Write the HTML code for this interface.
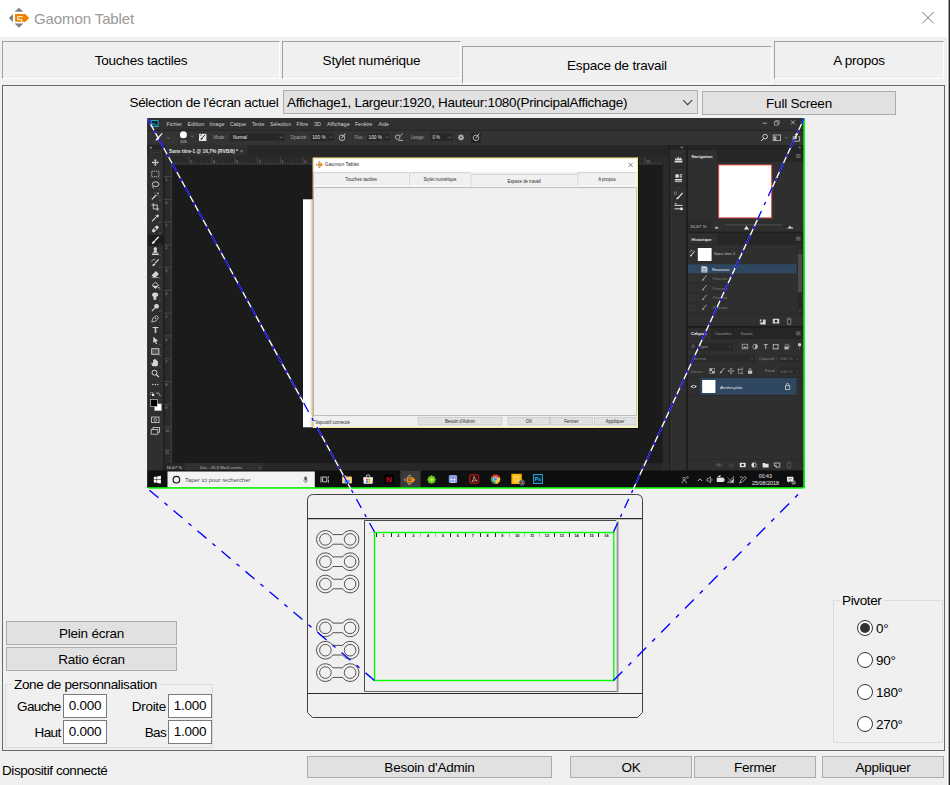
<!DOCTYPE html>
<html lang="fr">
<head>
<meta charset="utf-8">
<title>Gaomon Tablet</title>
<style>
html,body{margin:0;padding:0;}
body{width:950px;height:785px;overflow:hidden;background:#f0f0f0;font-family:"Liberation Sans", sans-serif;font-size:13.5px;letter-spacing:-0.22px;color:#000;position:relative;}
.abs{position:absolute;box-sizing:border-box;}
.titlebar{left:0;top:0;width:950px;height:37px;background:#fff;}
.title{left:34px;top:9px;font-size:15px;color:#999;white-space:nowrap;line-height:20px;letter-spacing:-0.1px;}
.tab{height:38px;border:1px solid;border-color:#a0a0a0 #fff #fff #a0a0a0;text-align:center;line-height:38px;white-space:nowrap;}
.panel{left:2px;top:85px;width:943px;height:666px;border:1px solid #696969;}
.btn{background:#e1e1e1;border:1px solid #adadad;text-align:center;white-space:nowrap;}
.lbl{white-space:nowrap;line-height:16px;margin-top:1px;letter-spacing:-0.3px;}
.nar{letter-spacing:-0.65px;}
.inp{background:#fff;border:1px solid #7a7a7a;width:44px;height:24px;text-align:center;line-height:22px;}
.grp{border:1px solid #dcdcdc;}
.grpl{background:#f0f0f0;padding:0 2px;white-space:nowrap;line-height:16px;margin-top:1px;letter-spacing:-0.36px;}
.radio{width:16px;height:16px;border:1px solid #333;border-radius:50%;background:#fff;}
.dot{width:10px;height:10px;border-radius:50%;background:#333;left:2px;top:2px;}
svg text{font-family:"Liberation Sans", sans-serif;letter-spacing:0;}
</style>
</head>
<body>
<div class="abs titlebar"></div>
<svg class="abs" style="left:0;top:0" width="60" height="37" viewBox="0 0 60 37">
<path d="M14.6,11.8 H23.4 L19,7.8 Z M14.6,23.4 H23.4 L19,27.8 Z M13,14 V22 L8.8,18 Z" fill="#808080"/>
<path d="M15,14 H25.4 L29.1,17.9 L25.4,22.1 H15 Z" fill="#f08200"/>
<path d="M22.6,16.7 H17.6 V19.4 H21.6 V21.8" fill="none" stroke="#fff" stroke-width="1"/>
<path d="M15,22 H24" stroke="#fff" stroke-width="0.6"/>
</svg>
<div class="abs title">Gaomon Tablet</div>
<svg class="abs" style="left:916px;top:6px" width="24" height="24" viewBox="0 0 24 24"><path d="M6.3,6 L17.7,17.4 M17.7,6 L6.3,17.4" stroke="#7a7a7a" stroke-width="1"/></svg>

<div class="abs tab" style="left:2px;top:41px;width:278px;">Touches tactiles</div>
<div class="abs tab" style="left:282px;top:41px;width:179px;">Stylet numérique</div>
<div class="abs tab" style="left:462px;top:46px;width:310px;">Espace de travail</div>
<div class="abs tab" style="left:774px;top:41px;width:170px;">A propos</div>

<div class="abs panel"></div>

<div class="abs lbl" style="left:100px;top:94px;width:178.5px;text-align:right;">Sélection de l'écran actuel</div>
<div class="abs" style="left:283px;top:90px;width:415px;height:24px;background:#e1e1e1;border:1px solid #adadad;"></div>
<div class="abs lbl" style="left:287px;top:94px;">Affichage1, Largeur:1920, Hauteur:1080(PrincipalAffichage)</div>
<svg class="abs" style="left:680px;top:96px" width="16" height="14" viewBox="0 0 16 14"><path d="M3.1,4.2 L7.6,8.7 L12.1,4.2" fill="none" stroke="#3c3c3c" stroke-width="1.1"/></svg>
<div class="abs btn" style="left:702px;top:91px;width:194px;height:24px;line-height:24px;">Full Screen</div>

<svg class="abs" style="left:0;top:0" width="950" height="785" viewBox="0 0 950 785">
<rect x="147.50" y="118.00" width="656.10" height="369.60" fill="#1b1b1b" />
<rect x="147.50" y="118.00" width="656.10" height="12.30" fill="#303030" />
<rect x="147.50" y="130.30" width="656.10" height="14.70" fill="#333333" />
<line x1="147.50" y1="130.30" x2="803.60" y2="130.30" stroke="#242424" stroke-width="0.6" />
<rect x="147.50" y="145.00" width="656.10" height="12.00" fill="#262626" />
<rect x="147.50" y="149.40" width="16.00" height="321.40" fill="#2f2f2f" />
<rect x="147.50" y="144.80" width="16.00" height="4.60" fill="#242424" />
<rect x="163.00" y="144.80" width="1.60" height="326.00" fill="#1f1f1f" />
<text x="149.50" y="149.00" font-size="4.5" fill="#c8c8c8" >«</text>
<path d="M151,152.4 h9" stroke="#454545" stroke-width="0.7" stroke-dasharray="0.7 0.5"/>
<rect x="164.60" y="145.00" width="83.10" height="11.60" fill="#2f2f2f" />
<text x="169.00" y="153.20" font-size="4.6" fill="#e6e6e6" textLength="69.00" lengthAdjust="spacingAndGlyphs" font-weight="bold" >Sans titre-1 @ 16,7% (RVB/8) *</text>
<text x="240.00" y="153.40" font-size="5" fill="#b0b0b0" >×</text>
<rect x="164.60" y="156.50" width="498.00" height="8.00" fill="#2a2a2a" />
<rect x="164.60" y="164.40" width="7.40" height="299.00" fill="#2a2a2a" />
<line x1="172.00" y1="164.20" x2="662.60" y2="164.20" stroke="#3a3a3a" stroke-width="0.5" />
<line x1="171.80" y1="164.40" x2="171.80" y2="463.00" stroke="#3a3a3a" stroke-width="0.5" />
<line x1="173.15" y1="163.00" x2="173.15" y2="164.40" stroke="#666666" stroke-width="0.45" />
<line x1="175.43" y1="163.00" x2="175.43" y2="164.40" stroke="#666666" stroke-width="0.45" />
<line x1="177.71" y1="162.00" x2="177.71" y2="164.40" stroke="#666666" stroke-width="0.45" />
<line x1="179.99" y1="163.00" x2="179.99" y2="164.40" stroke="#666666" stroke-width="0.45" />
<line x1="182.27" y1="163.00" x2="182.27" y2="164.40" stroke="#666666" stroke-width="0.45" />
<line x1="184.54" y1="163.00" x2="184.54" y2="164.40" stroke="#666666" stroke-width="0.45" />
<line x1="186.82" y1="163.00" x2="186.82" y2="164.40" stroke="#666666" stroke-width="0.45" />
<line x1="189.10" y1="157.00" x2="189.10" y2="164.40" stroke="#5a5a5a" stroke-width="0.6" />
<text x="190.30" y="162.60" font-size="3.8" fill="#9a9a9a" >5</text>
<line x1="191.38" y1="163.00" x2="191.38" y2="164.40" stroke="#666666" stroke-width="0.45" />
<line x1="193.66" y1="163.00" x2="193.66" y2="164.40" stroke="#666666" stroke-width="0.45" />
<line x1="195.93" y1="163.00" x2="195.93" y2="164.40" stroke="#666666" stroke-width="0.45" />
<line x1="198.21" y1="163.00" x2="198.21" y2="164.40" stroke="#666666" stroke-width="0.45" />
<line x1="200.49" y1="162.00" x2="200.49" y2="164.40" stroke="#666666" stroke-width="0.45" />
<line x1="202.77" y1="163.00" x2="202.77" y2="164.40" stroke="#666666" stroke-width="0.45" />
<line x1="205.05" y1="163.00" x2="205.05" y2="164.40" stroke="#666666" stroke-width="0.45" />
<line x1="207.32" y1="163.00" x2="207.32" y2="164.40" stroke="#666666" stroke-width="0.45" />
<line x1="209.60" y1="163.00" x2="209.60" y2="164.40" stroke="#666666" stroke-width="0.45" />
<line x1="211.88" y1="157.00" x2="211.88" y2="164.40" stroke="#5a5a5a" stroke-width="0.6" />
<text x="213.08" y="162.60" font-size="3.8" fill="#9a9a9a" >4</text>
<line x1="214.16" y1="163.00" x2="214.16" y2="164.40" stroke="#666666" stroke-width="0.45" />
<line x1="216.44" y1="163.00" x2="216.44" y2="164.40" stroke="#666666" stroke-width="0.45" />
<line x1="218.71" y1="163.00" x2="218.71" y2="164.40" stroke="#666666" stroke-width="0.45" />
<line x1="220.99" y1="163.00" x2="220.99" y2="164.40" stroke="#666666" stroke-width="0.45" />
<line x1="223.27" y1="162.00" x2="223.27" y2="164.40" stroke="#666666" stroke-width="0.45" />
<line x1="225.55" y1="163.00" x2="225.55" y2="164.40" stroke="#666666" stroke-width="0.45" />
<line x1="227.83" y1="163.00" x2="227.83" y2="164.40" stroke="#666666" stroke-width="0.45" />
<line x1="230.10" y1="163.00" x2="230.10" y2="164.40" stroke="#666666" stroke-width="0.45" />
<line x1="232.38" y1="163.00" x2="232.38" y2="164.40" stroke="#666666" stroke-width="0.45" />
<line x1="234.66" y1="157.00" x2="234.66" y2="164.40" stroke="#5a5a5a" stroke-width="0.6" />
<text x="235.86" y="162.60" font-size="3.8" fill="#9a9a9a" >3</text>
<line x1="236.94" y1="163.00" x2="236.94" y2="164.40" stroke="#666666" stroke-width="0.45" />
<line x1="239.22" y1="163.00" x2="239.22" y2="164.40" stroke="#666666" stroke-width="0.45" />
<line x1="241.49" y1="163.00" x2="241.49" y2="164.40" stroke="#666666" stroke-width="0.45" />
<line x1="243.77" y1="163.00" x2="243.77" y2="164.40" stroke="#666666" stroke-width="0.45" />
<line x1="246.05" y1="162.00" x2="246.05" y2="164.40" stroke="#666666" stroke-width="0.45" />
<line x1="248.33" y1="163.00" x2="248.33" y2="164.40" stroke="#666666" stroke-width="0.45" />
<line x1="250.61" y1="163.00" x2="250.61" y2="164.40" stroke="#666666" stroke-width="0.45" />
<line x1="252.88" y1="163.00" x2="252.88" y2="164.40" stroke="#666666" stroke-width="0.45" />
<line x1="255.16" y1="163.00" x2="255.16" y2="164.40" stroke="#666666" stroke-width="0.45" />
<line x1="257.44" y1="157.00" x2="257.44" y2="164.40" stroke="#5a5a5a" stroke-width="0.6" />
<text x="258.64" y="162.60" font-size="3.8" fill="#9a9a9a" >2</text>
<line x1="259.72" y1="163.00" x2="259.72" y2="164.40" stroke="#666666" stroke-width="0.45" />
<line x1="262.00" y1="163.00" x2="262.00" y2="164.40" stroke="#666666" stroke-width="0.45" />
<line x1="264.27" y1="163.00" x2="264.27" y2="164.40" stroke="#666666" stroke-width="0.45" />
<line x1="266.55" y1="163.00" x2="266.55" y2="164.40" stroke="#666666" stroke-width="0.45" />
<line x1="268.83" y1="162.00" x2="268.83" y2="164.40" stroke="#666666" stroke-width="0.45" />
<line x1="271.11" y1="163.00" x2="271.11" y2="164.40" stroke="#666666" stroke-width="0.45" />
<line x1="273.39" y1="163.00" x2="273.39" y2="164.40" stroke="#666666" stroke-width="0.45" />
<line x1="275.66" y1="163.00" x2="275.66" y2="164.40" stroke="#666666" stroke-width="0.45" />
<line x1="277.94" y1="163.00" x2="277.94" y2="164.40" stroke="#666666" stroke-width="0.45" />
<line x1="280.22" y1="157.00" x2="280.22" y2="164.40" stroke="#5a5a5a" stroke-width="0.6" />
<text x="281.42" y="162.60" font-size="3.8" fill="#9a9a9a" >1</text>
<line x1="282.50" y1="163.00" x2="282.50" y2="164.40" stroke="#666666" stroke-width="0.45" />
<line x1="284.78" y1="163.00" x2="284.78" y2="164.40" stroke="#666666" stroke-width="0.45" />
<line x1="287.05" y1="163.00" x2="287.05" y2="164.40" stroke="#666666" stroke-width="0.45" />
<line x1="289.33" y1="163.00" x2="289.33" y2="164.40" stroke="#666666" stroke-width="0.45" />
<line x1="291.61" y1="162.00" x2="291.61" y2="164.40" stroke="#666666" stroke-width="0.45" />
<line x1="293.89" y1="163.00" x2="293.89" y2="164.40" stroke="#666666" stroke-width="0.45" />
<line x1="296.17" y1="163.00" x2="296.17" y2="164.40" stroke="#666666" stroke-width="0.45" />
<line x1="298.44" y1="163.00" x2="298.44" y2="164.40" stroke="#666666" stroke-width="0.45" />
<line x1="300.72" y1="163.00" x2="300.72" y2="164.40" stroke="#666666" stroke-width="0.45" />
<line x1="303.00" y1="157.00" x2="303.00" y2="164.40" stroke="#5a5a5a" stroke-width="0.6" />
<text x="304.20" y="162.60" font-size="3.8" fill="#9a9a9a" >0</text>
<line x1="305.28" y1="163.00" x2="305.28" y2="164.40" stroke="#666666" stroke-width="0.45" />
<line x1="307.56" y1="163.00" x2="307.56" y2="164.40" stroke="#666666" stroke-width="0.45" />
<line x1="309.83" y1="163.00" x2="309.83" y2="164.40" stroke="#666666" stroke-width="0.45" />
<line x1="312.11" y1="163.00" x2="312.11" y2="164.40" stroke="#666666" stroke-width="0.45" />
<line x1="314.39" y1="162.00" x2="314.39" y2="164.40" stroke="#666666" stroke-width="0.45" />
<line x1="316.67" y1="163.00" x2="316.67" y2="164.40" stroke="#666666" stroke-width="0.45" />
<line x1="318.95" y1="163.00" x2="318.95" y2="164.40" stroke="#666666" stroke-width="0.45" />
<line x1="321.22" y1="163.00" x2="321.22" y2="164.40" stroke="#666666" stroke-width="0.45" />
<line x1="323.50" y1="163.00" x2="323.50" y2="164.40" stroke="#666666" stroke-width="0.45" />
<line x1="325.78" y1="157.00" x2="325.78" y2="164.40" stroke="#5a5a5a" stroke-width="0.6" />
<text x="326.98" y="162.60" font-size="3.8" fill="#9a9a9a" >1</text>
<line x1="328.06" y1="163.00" x2="328.06" y2="164.40" stroke="#666666" stroke-width="0.45" />
<line x1="330.34" y1="163.00" x2="330.34" y2="164.40" stroke="#666666" stroke-width="0.45" />
<line x1="332.61" y1="163.00" x2="332.61" y2="164.40" stroke="#666666" stroke-width="0.45" />
<line x1="334.89" y1="163.00" x2="334.89" y2="164.40" stroke="#666666" stroke-width="0.45" />
<line x1="337.17" y1="162.00" x2="337.17" y2="164.40" stroke="#666666" stroke-width="0.45" />
<line x1="339.45" y1="163.00" x2="339.45" y2="164.40" stroke="#666666" stroke-width="0.45" />
<line x1="341.73" y1="163.00" x2="341.73" y2="164.40" stroke="#666666" stroke-width="0.45" />
<line x1="344.00" y1="163.00" x2="344.00" y2="164.40" stroke="#666666" stroke-width="0.45" />
<line x1="346.28" y1="163.00" x2="346.28" y2="164.40" stroke="#666666" stroke-width="0.45" />
<line x1="348.56" y1="157.00" x2="348.56" y2="164.40" stroke="#5a5a5a" stroke-width="0.6" />
<text x="349.76" y="162.60" font-size="3.8" fill="#9a9a9a" >2</text>
<line x1="350.84" y1="163.00" x2="350.84" y2="164.40" stroke="#666666" stroke-width="0.45" />
<line x1="353.12" y1="163.00" x2="353.12" y2="164.40" stroke="#666666" stroke-width="0.45" />
<line x1="355.39" y1="163.00" x2="355.39" y2="164.40" stroke="#666666" stroke-width="0.45" />
<line x1="357.67" y1="163.00" x2="357.67" y2="164.40" stroke="#666666" stroke-width="0.45" />
<line x1="359.95" y1="162.00" x2="359.95" y2="164.40" stroke="#666666" stroke-width="0.45" />
<line x1="362.23" y1="163.00" x2="362.23" y2="164.40" stroke="#666666" stroke-width="0.45" />
<line x1="364.51" y1="163.00" x2="364.51" y2="164.40" stroke="#666666" stroke-width="0.45" />
<line x1="366.78" y1="163.00" x2="366.78" y2="164.40" stroke="#666666" stroke-width="0.45" />
<line x1="369.06" y1="163.00" x2="369.06" y2="164.40" stroke="#666666" stroke-width="0.45" />
<line x1="371.34" y1="157.00" x2="371.34" y2="164.40" stroke="#5a5a5a" stroke-width="0.6" />
<text x="372.54" y="162.60" font-size="3.8" fill="#9a9a9a" >3</text>
<line x1="373.62" y1="163.00" x2="373.62" y2="164.40" stroke="#666666" stroke-width="0.45" />
<line x1="375.90" y1="163.00" x2="375.90" y2="164.40" stroke="#666666" stroke-width="0.45" />
<line x1="378.17" y1="163.00" x2="378.17" y2="164.40" stroke="#666666" stroke-width="0.45" />
<line x1="380.45" y1="163.00" x2="380.45" y2="164.40" stroke="#666666" stroke-width="0.45" />
<line x1="382.73" y1="162.00" x2="382.73" y2="164.40" stroke="#666666" stroke-width="0.45" />
<line x1="385.01" y1="163.00" x2="385.01" y2="164.40" stroke="#666666" stroke-width="0.45" />
<line x1="387.29" y1="163.00" x2="387.29" y2="164.40" stroke="#666666" stroke-width="0.45" />
<line x1="389.56" y1="163.00" x2="389.56" y2="164.40" stroke="#666666" stroke-width="0.45" />
<line x1="391.84" y1="163.00" x2="391.84" y2="164.40" stroke="#666666" stroke-width="0.45" />
<line x1="394.12" y1="157.00" x2="394.12" y2="164.40" stroke="#5a5a5a" stroke-width="0.6" />
<text x="395.32" y="162.60" font-size="3.8" fill="#9a9a9a" >4</text>
<line x1="396.40" y1="163.00" x2="396.40" y2="164.40" stroke="#666666" stroke-width="0.45" />
<line x1="398.68" y1="163.00" x2="398.68" y2="164.40" stroke="#666666" stroke-width="0.45" />
<line x1="400.95" y1="163.00" x2="400.95" y2="164.40" stroke="#666666" stroke-width="0.45" />
<line x1="403.23" y1="163.00" x2="403.23" y2="164.40" stroke="#666666" stroke-width="0.45" />
<line x1="405.51" y1="162.00" x2="405.51" y2="164.40" stroke="#666666" stroke-width="0.45" />
<line x1="407.79" y1="163.00" x2="407.79" y2="164.40" stroke="#666666" stroke-width="0.45" />
<line x1="410.07" y1="163.00" x2="410.07" y2="164.40" stroke="#666666" stroke-width="0.45" />
<line x1="412.34" y1="163.00" x2="412.34" y2="164.40" stroke="#666666" stroke-width="0.45" />
<line x1="414.62" y1="163.00" x2="414.62" y2="164.40" stroke="#666666" stroke-width="0.45" />
<line x1="416.90" y1="157.00" x2="416.90" y2="164.40" stroke="#5a5a5a" stroke-width="0.6" />
<text x="418.10" y="162.60" font-size="3.8" fill="#9a9a9a" >5</text>
<line x1="419.18" y1="163.00" x2="419.18" y2="164.40" stroke="#666666" stroke-width="0.45" />
<line x1="421.46" y1="163.00" x2="421.46" y2="164.40" stroke="#666666" stroke-width="0.45" />
<line x1="423.73" y1="163.00" x2="423.73" y2="164.40" stroke="#666666" stroke-width="0.45" />
<line x1="426.01" y1="163.00" x2="426.01" y2="164.40" stroke="#666666" stroke-width="0.45" />
<line x1="428.29" y1="162.00" x2="428.29" y2="164.40" stroke="#666666" stroke-width="0.45" />
<line x1="430.57" y1="163.00" x2="430.57" y2="164.40" stroke="#666666" stroke-width="0.45" />
<line x1="432.85" y1="163.00" x2="432.85" y2="164.40" stroke="#666666" stroke-width="0.45" />
<line x1="435.12" y1="163.00" x2="435.12" y2="164.40" stroke="#666666" stroke-width="0.45" />
<line x1="437.40" y1="163.00" x2="437.40" y2="164.40" stroke="#666666" stroke-width="0.45" />
<line x1="439.68" y1="157.00" x2="439.68" y2="164.40" stroke="#5a5a5a" stroke-width="0.6" />
<text x="440.88" y="162.60" font-size="3.8" fill="#9a9a9a" >6</text>
<line x1="441.96" y1="163.00" x2="441.96" y2="164.40" stroke="#666666" stroke-width="0.45" />
<line x1="444.24" y1="163.00" x2="444.24" y2="164.40" stroke="#666666" stroke-width="0.45" />
<line x1="446.51" y1="163.00" x2="446.51" y2="164.40" stroke="#666666" stroke-width="0.45" />
<line x1="448.79" y1="163.00" x2="448.79" y2="164.40" stroke="#666666" stroke-width="0.45" />
<line x1="451.07" y1="162.00" x2="451.07" y2="164.40" stroke="#666666" stroke-width="0.45" />
<line x1="453.35" y1="163.00" x2="453.35" y2="164.40" stroke="#666666" stroke-width="0.45" />
<line x1="455.63" y1="163.00" x2="455.63" y2="164.40" stroke="#666666" stroke-width="0.45" />
<line x1="457.90" y1="163.00" x2="457.90" y2="164.40" stroke="#666666" stroke-width="0.45" />
<line x1="460.18" y1="163.00" x2="460.18" y2="164.40" stroke="#666666" stroke-width="0.45" />
<line x1="462.46" y1="157.00" x2="462.46" y2="164.40" stroke="#5a5a5a" stroke-width="0.6" />
<text x="463.66" y="162.60" font-size="3.8" fill="#9a9a9a" >7</text>
<line x1="464.74" y1="163.00" x2="464.74" y2="164.40" stroke="#666666" stroke-width="0.45" />
<line x1="467.02" y1="163.00" x2="467.02" y2="164.40" stroke="#666666" stroke-width="0.45" />
<line x1="469.29" y1="163.00" x2="469.29" y2="164.40" stroke="#666666" stroke-width="0.45" />
<line x1="471.57" y1="163.00" x2="471.57" y2="164.40" stroke="#666666" stroke-width="0.45" />
<line x1="473.85" y1="162.00" x2="473.85" y2="164.40" stroke="#666666" stroke-width="0.45" />
<line x1="476.13" y1="163.00" x2="476.13" y2="164.40" stroke="#666666" stroke-width="0.45" />
<line x1="478.41" y1="163.00" x2="478.41" y2="164.40" stroke="#666666" stroke-width="0.45" />
<line x1="480.68" y1="163.00" x2="480.68" y2="164.40" stroke="#666666" stroke-width="0.45" />
<line x1="482.96" y1="163.00" x2="482.96" y2="164.40" stroke="#666666" stroke-width="0.45" />
<line x1="485.24" y1="157.00" x2="485.24" y2="164.40" stroke="#5a5a5a" stroke-width="0.6" />
<text x="486.44" y="162.60" font-size="3.8" fill="#9a9a9a" >8</text>
<line x1="487.52" y1="163.00" x2="487.52" y2="164.40" stroke="#666666" stroke-width="0.45" />
<line x1="489.80" y1="163.00" x2="489.80" y2="164.40" stroke="#666666" stroke-width="0.45" />
<line x1="492.07" y1="163.00" x2="492.07" y2="164.40" stroke="#666666" stroke-width="0.45" />
<line x1="494.35" y1="163.00" x2="494.35" y2="164.40" stroke="#666666" stroke-width="0.45" />
<line x1="496.63" y1="162.00" x2="496.63" y2="164.40" stroke="#666666" stroke-width="0.45" />
<line x1="498.91" y1="163.00" x2="498.91" y2="164.40" stroke="#666666" stroke-width="0.45" />
<line x1="501.19" y1="163.00" x2="501.19" y2="164.40" stroke="#666666" stroke-width="0.45" />
<line x1="503.46" y1="163.00" x2="503.46" y2="164.40" stroke="#666666" stroke-width="0.45" />
<line x1="505.74" y1="163.00" x2="505.74" y2="164.40" stroke="#666666" stroke-width="0.45" />
<line x1="508.02" y1="157.00" x2="508.02" y2="164.40" stroke="#5a5a5a" stroke-width="0.6" />
<text x="509.22" y="162.60" font-size="3.8" fill="#9a9a9a" >9</text>
<line x1="510.30" y1="163.00" x2="510.30" y2="164.40" stroke="#666666" stroke-width="0.45" />
<line x1="512.58" y1="163.00" x2="512.58" y2="164.40" stroke="#666666" stroke-width="0.45" />
<line x1="514.85" y1="163.00" x2="514.85" y2="164.40" stroke="#666666" stroke-width="0.45" />
<line x1="517.13" y1="163.00" x2="517.13" y2="164.40" stroke="#666666" stroke-width="0.45" />
<line x1="519.41" y1="162.00" x2="519.41" y2="164.40" stroke="#666666" stroke-width="0.45" />
<line x1="521.69" y1="163.00" x2="521.69" y2="164.40" stroke="#666666" stroke-width="0.45" />
<line x1="523.97" y1="163.00" x2="523.97" y2="164.40" stroke="#666666" stroke-width="0.45" />
<line x1="526.24" y1="163.00" x2="526.24" y2="164.40" stroke="#666666" stroke-width="0.45" />
<line x1="528.52" y1="163.00" x2="528.52" y2="164.40" stroke="#666666" stroke-width="0.45" />
<line x1="530.80" y1="157.00" x2="530.80" y2="164.40" stroke="#5a5a5a" stroke-width="0.6" />
<text x="532.00" y="162.60" font-size="3.8" fill="#9a9a9a" >10</text>
<line x1="533.08" y1="163.00" x2="533.08" y2="164.40" stroke="#666666" stroke-width="0.45" />
<line x1="535.36" y1="163.00" x2="535.36" y2="164.40" stroke="#666666" stroke-width="0.45" />
<line x1="537.63" y1="163.00" x2="537.63" y2="164.40" stroke="#666666" stroke-width="0.45" />
<line x1="539.91" y1="163.00" x2="539.91" y2="164.40" stroke="#666666" stroke-width="0.45" />
<line x1="542.19" y1="162.00" x2="542.19" y2="164.40" stroke="#666666" stroke-width="0.45" />
<line x1="544.47" y1="163.00" x2="544.47" y2="164.40" stroke="#666666" stroke-width="0.45" />
<line x1="546.75" y1="163.00" x2="546.75" y2="164.40" stroke="#666666" stroke-width="0.45" />
<line x1="549.02" y1="163.00" x2="549.02" y2="164.40" stroke="#666666" stroke-width="0.45" />
<line x1="551.30" y1="163.00" x2="551.30" y2="164.40" stroke="#666666" stroke-width="0.45" />
<line x1="553.58" y1="157.00" x2="553.58" y2="164.40" stroke="#5a5a5a" stroke-width="0.6" />
<text x="554.78" y="162.60" font-size="3.8" fill="#9a9a9a" >11</text>
<line x1="555.86" y1="163.00" x2="555.86" y2="164.40" stroke="#666666" stroke-width="0.45" />
<line x1="558.14" y1="163.00" x2="558.14" y2="164.40" stroke="#666666" stroke-width="0.45" />
<line x1="560.41" y1="163.00" x2="560.41" y2="164.40" stroke="#666666" stroke-width="0.45" />
<line x1="562.69" y1="163.00" x2="562.69" y2="164.40" stroke="#666666" stroke-width="0.45" />
<line x1="564.97" y1="162.00" x2="564.97" y2="164.40" stroke="#666666" stroke-width="0.45" />
<line x1="567.25" y1="163.00" x2="567.25" y2="164.40" stroke="#666666" stroke-width="0.45" />
<line x1="569.53" y1="163.00" x2="569.53" y2="164.40" stroke="#666666" stroke-width="0.45" />
<line x1="571.80" y1="163.00" x2="571.80" y2="164.40" stroke="#666666" stroke-width="0.45" />
<line x1="574.08" y1="163.00" x2="574.08" y2="164.40" stroke="#666666" stroke-width="0.45" />
<line x1="576.36" y1="157.00" x2="576.36" y2="164.40" stroke="#5a5a5a" stroke-width="0.6" />
<text x="577.56" y="162.60" font-size="3.8" fill="#9a9a9a" >12</text>
<line x1="578.64" y1="163.00" x2="578.64" y2="164.40" stroke="#666666" stroke-width="0.45" />
<line x1="580.92" y1="163.00" x2="580.92" y2="164.40" stroke="#666666" stroke-width="0.45" />
<line x1="583.19" y1="163.00" x2="583.19" y2="164.40" stroke="#666666" stroke-width="0.45" />
<line x1="585.47" y1="163.00" x2="585.47" y2="164.40" stroke="#666666" stroke-width="0.45" />
<line x1="587.75" y1="162.00" x2="587.75" y2="164.40" stroke="#666666" stroke-width="0.45" />
<line x1="590.03" y1="163.00" x2="590.03" y2="164.40" stroke="#666666" stroke-width="0.45" />
<line x1="592.31" y1="163.00" x2="592.31" y2="164.40" stroke="#666666" stroke-width="0.45" />
<line x1="594.58" y1="163.00" x2="594.58" y2="164.40" stroke="#666666" stroke-width="0.45" />
<line x1="596.86" y1="163.00" x2="596.86" y2="164.40" stroke="#666666" stroke-width="0.45" />
<line x1="599.14" y1="157.00" x2="599.14" y2="164.40" stroke="#5a5a5a" stroke-width="0.6" />
<text x="600.34" y="162.60" font-size="3.8" fill="#9a9a9a" >13</text>
<line x1="601.42" y1="163.00" x2="601.42" y2="164.40" stroke="#666666" stroke-width="0.45" />
<line x1="603.70" y1="163.00" x2="603.70" y2="164.40" stroke="#666666" stroke-width="0.45" />
<line x1="605.97" y1="163.00" x2="605.97" y2="164.40" stroke="#666666" stroke-width="0.45" />
<line x1="608.25" y1="163.00" x2="608.25" y2="164.40" stroke="#666666" stroke-width="0.45" />
<line x1="610.53" y1="162.00" x2="610.53" y2="164.40" stroke="#666666" stroke-width="0.45" />
<line x1="612.81" y1="163.00" x2="612.81" y2="164.40" stroke="#666666" stroke-width="0.45" />
<line x1="615.09" y1="163.00" x2="615.09" y2="164.40" stroke="#666666" stroke-width="0.45" />
<line x1="617.36" y1="163.00" x2="617.36" y2="164.40" stroke="#666666" stroke-width="0.45" />
<line x1="619.64" y1="163.00" x2="619.64" y2="164.40" stroke="#666666" stroke-width="0.45" />
<line x1="621.92" y1="157.00" x2="621.92" y2="164.40" stroke="#5a5a5a" stroke-width="0.6" />
<text x="623.12" y="162.60" font-size="3.8" fill="#9a9a9a" >14</text>
<line x1="624.20" y1="163.00" x2="624.20" y2="164.40" stroke="#666666" stroke-width="0.45" />
<line x1="626.48" y1="163.00" x2="626.48" y2="164.40" stroke="#666666" stroke-width="0.45" />
<line x1="628.75" y1="163.00" x2="628.75" y2="164.40" stroke="#666666" stroke-width="0.45" />
<line x1="631.03" y1="163.00" x2="631.03" y2="164.40" stroke="#666666" stroke-width="0.45" />
<line x1="633.31" y1="162.00" x2="633.31" y2="164.40" stroke="#666666" stroke-width="0.45" />
<line x1="635.59" y1="163.00" x2="635.59" y2="164.40" stroke="#666666" stroke-width="0.45" />
<line x1="637.87" y1="163.00" x2="637.87" y2="164.40" stroke="#666666" stroke-width="0.45" />
<line x1="640.14" y1="163.00" x2="640.14" y2="164.40" stroke="#666666" stroke-width="0.45" />
<line x1="642.42" y1="163.00" x2="642.42" y2="164.40" stroke="#666666" stroke-width="0.45" />
<line x1="644.70" y1="157.00" x2="644.70" y2="164.40" stroke="#5a5a5a" stroke-width="0.6" />
<text x="645.90" y="162.60" font-size="3.8" fill="#9a9a9a" >15</text>
<line x1="646.98" y1="163.00" x2="646.98" y2="164.40" stroke="#666666" stroke-width="0.45" />
<line x1="649.26" y1="163.00" x2="649.26" y2="164.40" stroke="#666666" stroke-width="0.45" />
<line x1="651.53" y1="163.00" x2="651.53" y2="164.40" stroke="#666666" stroke-width="0.45" />
<line x1="653.81" y1="163.00" x2="653.81" y2="164.40" stroke="#666666" stroke-width="0.45" />
<line x1="656.09" y1="162.00" x2="656.09" y2="164.40" stroke="#666666" stroke-width="0.45" />
<line x1="658.37" y1="163.00" x2="658.37" y2="164.40" stroke="#666666" stroke-width="0.45" />
<line x1="660.65" y1="163.00" x2="660.65" y2="164.40" stroke="#666666" stroke-width="0.45" />
<line x1="169.40" y1="165.13" x2="171.80" y2="165.13" stroke="#666666" stroke-width="0.45" />
<line x1="170.40" y1="167.41" x2="171.80" y2="167.41" stroke="#666666" stroke-width="0.45" />
<line x1="170.40" y1="169.69" x2="171.80" y2="169.69" stroke="#666666" stroke-width="0.45" />
<line x1="170.40" y1="171.96" x2="171.80" y2="171.96" stroke="#666666" stroke-width="0.45" />
<line x1="170.40" y1="174.24" x2="171.80" y2="174.24" stroke="#666666" stroke-width="0.45" />
<line x1="164.00" y1="176.52" x2="172.00" y2="176.52" stroke="#6a6a6a" stroke-width="0.5" />
<text x="165.20" y="181.12" font-size="3.8" fill="#9a9a9a" >1</text>
<line x1="170.40" y1="178.80" x2="171.80" y2="178.80" stroke="#666666" stroke-width="0.45" />
<line x1="170.40" y1="181.08" x2="171.80" y2="181.08" stroke="#666666" stroke-width="0.45" />
<line x1="170.40" y1="183.35" x2="171.80" y2="183.35" stroke="#666666" stroke-width="0.45" />
<line x1="170.40" y1="185.63" x2="171.80" y2="185.63" stroke="#666666" stroke-width="0.45" />
<line x1="169.40" y1="187.91" x2="171.80" y2="187.91" stroke="#666666" stroke-width="0.45" />
<line x1="170.40" y1="190.19" x2="171.80" y2="190.19" stroke="#666666" stroke-width="0.45" />
<line x1="170.40" y1="192.47" x2="171.80" y2="192.47" stroke="#666666" stroke-width="0.45" />
<line x1="170.40" y1="194.74" x2="171.80" y2="194.74" stroke="#666666" stroke-width="0.45" />
<line x1="170.40" y1="197.02" x2="171.80" y2="197.02" stroke="#666666" stroke-width="0.45" />
<line x1="164.00" y1="199.30" x2="172.00" y2="199.30" stroke="#6a6a6a" stroke-width="0.5" />
<text x="165.20" y="203.90" font-size="3.8" fill="#9a9a9a" >0</text>
<line x1="170.40" y1="201.58" x2="171.80" y2="201.58" stroke="#666666" stroke-width="0.45" />
<line x1="170.40" y1="203.86" x2="171.80" y2="203.86" stroke="#666666" stroke-width="0.45" />
<line x1="170.40" y1="206.13" x2="171.80" y2="206.13" stroke="#666666" stroke-width="0.45" />
<line x1="170.40" y1="208.41" x2="171.80" y2="208.41" stroke="#666666" stroke-width="0.45" />
<line x1="169.40" y1="210.69" x2="171.80" y2="210.69" stroke="#666666" stroke-width="0.45" />
<line x1="170.40" y1="212.97" x2="171.80" y2="212.97" stroke="#666666" stroke-width="0.45" />
<line x1="170.40" y1="215.25" x2="171.80" y2="215.25" stroke="#666666" stroke-width="0.45" />
<line x1="170.40" y1="217.52" x2="171.80" y2="217.52" stroke="#666666" stroke-width="0.45" />
<line x1="170.40" y1="219.80" x2="171.80" y2="219.80" stroke="#666666" stroke-width="0.45" />
<line x1="164.00" y1="222.08" x2="172.00" y2="222.08" stroke="#6a6a6a" stroke-width="0.5" />
<text x="165.20" y="226.68" font-size="3.8" fill="#9a9a9a" >1</text>
<line x1="170.40" y1="224.36" x2="171.80" y2="224.36" stroke="#666666" stroke-width="0.45" />
<line x1="170.40" y1="226.64" x2="171.80" y2="226.64" stroke="#666666" stroke-width="0.45" />
<line x1="170.40" y1="228.91" x2="171.80" y2="228.91" stroke="#666666" stroke-width="0.45" />
<line x1="170.40" y1="231.19" x2="171.80" y2="231.19" stroke="#666666" stroke-width="0.45" />
<line x1="169.40" y1="233.47" x2="171.80" y2="233.47" stroke="#666666" stroke-width="0.45" />
<line x1="170.40" y1="235.75" x2="171.80" y2="235.75" stroke="#666666" stroke-width="0.45" />
<line x1="170.40" y1="238.03" x2="171.80" y2="238.03" stroke="#666666" stroke-width="0.45" />
<line x1="170.40" y1="240.30" x2="171.80" y2="240.30" stroke="#666666" stroke-width="0.45" />
<line x1="170.40" y1="242.58" x2="171.80" y2="242.58" stroke="#666666" stroke-width="0.45" />
<line x1="164.00" y1="244.86" x2="172.00" y2="244.86" stroke="#6a6a6a" stroke-width="0.5" />
<text x="165.20" y="249.46" font-size="3.8" fill="#9a9a9a" >2</text>
<line x1="170.40" y1="247.14" x2="171.80" y2="247.14" stroke="#666666" stroke-width="0.45" />
<line x1="170.40" y1="249.42" x2="171.80" y2="249.42" stroke="#666666" stroke-width="0.45" />
<line x1="170.40" y1="251.69" x2="171.80" y2="251.69" stroke="#666666" stroke-width="0.45" />
<line x1="170.40" y1="253.97" x2="171.80" y2="253.97" stroke="#666666" stroke-width="0.45" />
<line x1="169.40" y1="256.25" x2="171.80" y2="256.25" stroke="#666666" stroke-width="0.45" />
<line x1="170.40" y1="258.53" x2="171.80" y2="258.53" stroke="#666666" stroke-width="0.45" />
<line x1="170.40" y1="260.81" x2="171.80" y2="260.81" stroke="#666666" stroke-width="0.45" />
<line x1="170.40" y1="263.08" x2="171.80" y2="263.08" stroke="#666666" stroke-width="0.45" />
<line x1="170.40" y1="265.36" x2="171.80" y2="265.36" stroke="#666666" stroke-width="0.45" />
<line x1="164.00" y1="267.64" x2="172.00" y2="267.64" stroke="#6a6a6a" stroke-width="0.5" />
<text x="165.20" y="272.24" font-size="3.8" fill="#9a9a9a" >3</text>
<line x1="170.40" y1="269.92" x2="171.80" y2="269.92" stroke="#666666" stroke-width="0.45" />
<line x1="170.40" y1="272.20" x2="171.80" y2="272.20" stroke="#666666" stroke-width="0.45" />
<line x1="170.40" y1="274.47" x2="171.80" y2="274.47" stroke="#666666" stroke-width="0.45" />
<line x1="170.40" y1="276.75" x2="171.80" y2="276.75" stroke="#666666" stroke-width="0.45" />
<line x1="169.40" y1="279.03" x2="171.80" y2="279.03" stroke="#666666" stroke-width="0.45" />
<line x1="170.40" y1="281.31" x2="171.80" y2="281.31" stroke="#666666" stroke-width="0.45" />
<line x1="170.40" y1="283.59" x2="171.80" y2="283.59" stroke="#666666" stroke-width="0.45" />
<line x1="170.40" y1="285.86" x2="171.80" y2="285.86" stroke="#666666" stroke-width="0.45" />
<line x1="170.40" y1="288.14" x2="171.80" y2="288.14" stroke="#666666" stroke-width="0.45" />
<line x1="164.00" y1="290.42" x2="172.00" y2="290.42" stroke="#6a6a6a" stroke-width="0.5" />
<text x="165.20" y="295.02" font-size="3.8" fill="#9a9a9a" >4</text>
<line x1="170.40" y1="292.70" x2="171.80" y2="292.70" stroke="#666666" stroke-width="0.45" />
<line x1="170.40" y1="294.98" x2="171.80" y2="294.98" stroke="#666666" stroke-width="0.45" />
<line x1="170.40" y1="297.25" x2="171.80" y2="297.25" stroke="#666666" stroke-width="0.45" />
<line x1="170.40" y1="299.53" x2="171.80" y2="299.53" stroke="#666666" stroke-width="0.45" />
<line x1="169.40" y1="301.81" x2="171.80" y2="301.81" stroke="#666666" stroke-width="0.45" />
<line x1="170.40" y1="304.09" x2="171.80" y2="304.09" stroke="#666666" stroke-width="0.45" />
<line x1="170.40" y1="306.37" x2="171.80" y2="306.37" stroke="#666666" stroke-width="0.45" />
<line x1="170.40" y1="308.64" x2="171.80" y2="308.64" stroke="#666666" stroke-width="0.45" />
<line x1="170.40" y1="310.92" x2="171.80" y2="310.92" stroke="#666666" stroke-width="0.45" />
<line x1="164.00" y1="313.20" x2="172.00" y2="313.20" stroke="#6a6a6a" stroke-width="0.5" />
<text x="165.20" y="317.80" font-size="3.8" fill="#9a9a9a" >5</text>
<line x1="170.40" y1="315.48" x2="171.80" y2="315.48" stroke="#666666" stroke-width="0.45" />
<line x1="170.40" y1="317.76" x2="171.80" y2="317.76" stroke="#666666" stroke-width="0.45" />
<line x1="170.40" y1="320.03" x2="171.80" y2="320.03" stroke="#666666" stroke-width="0.45" />
<line x1="170.40" y1="322.31" x2="171.80" y2="322.31" stroke="#666666" stroke-width="0.45" />
<line x1="169.40" y1="324.59" x2="171.80" y2="324.59" stroke="#666666" stroke-width="0.45" />
<line x1="170.40" y1="326.87" x2="171.80" y2="326.87" stroke="#666666" stroke-width="0.45" />
<line x1="170.40" y1="329.15" x2="171.80" y2="329.15" stroke="#666666" stroke-width="0.45" />
<line x1="170.40" y1="331.42" x2="171.80" y2="331.42" stroke="#666666" stroke-width="0.45" />
<line x1="170.40" y1="333.70" x2="171.80" y2="333.70" stroke="#666666" stroke-width="0.45" />
<line x1="164.00" y1="335.98" x2="172.00" y2="335.98" stroke="#6a6a6a" stroke-width="0.5" />
<text x="165.20" y="340.58" font-size="3.8" fill="#9a9a9a" >6</text>
<line x1="170.40" y1="338.26" x2="171.80" y2="338.26" stroke="#666666" stroke-width="0.45" />
<line x1="170.40" y1="340.54" x2="171.80" y2="340.54" stroke="#666666" stroke-width="0.45" />
<line x1="170.40" y1="342.81" x2="171.80" y2="342.81" stroke="#666666" stroke-width="0.45" />
<line x1="170.40" y1="345.09" x2="171.80" y2="345.09" stroke="#666666" stroke-width="0.45" />
<line x1="169.40" y1="347.37" x2="171.80" y2="347.37" stroke="#666666" stroke-width="0.45" />
<line x1="170.40" y1="349.65" x2="171.80" y2="349.65" stroke="#666666" stroke-width="0.45" />
<line x1="170.40" y1="351.93" x2="171.80" y2="351.93" stroke="#666666" stroke-width="0.45" />
<line x1="170.40" y1="354.20" x2="171.80" y2="354.20" stroke="#666666" stroke-width="0.45" />
<line x1="170.40" y1="356.48" x2="171.80" y2="356.48" stroke="#666666" stroke-width="0.45" />
<line x1="164.00" y1="358.76" x2="172.00" y2="358.76" stroke="#6a6a6a" stroke-width="0.5" />
<text x="165.20" y="363.36" font-size="3.8" fill="#9a9a9a" >7</text>
<line x1="170.40" y1="361.04" x2="171.80" y2="361.04" stroke="#666666" stroke-width="0.45" />
<line x1="170.40" y1="363.32" x2="171.80" y2="363.32" stroke="#666666" stroke-width="0.45" />
<line x1="170.40" y1="365.59" x2="171.80" y2="365.59" stroke="#666666" stroke-width="0.45" />
<line x1="170.40" y1="367.87" x2="171.80" y2="367.87" stroke="#666666" stroke-width="0.45" />
<line x1="169.40" y1="370.15" x2="171.80" y2="370.15" stroke="#666666" stroke-width="0.45" />
<line x1="170.40" y1="372.43" x2="171.80" y2="372.43" stroke="#666666" stroke-width="0.45" />
<line x1="170.40" y1="374.71" x2="171.80" y2="374.71" stroke="#666666" stroke-width="0.45" />
<line x1="170.40" y1="376.98" x2="171.80" y2="376.98" stroke="#666666" stroke-width="0.45" />
<line x1="170.40" y1="379.26" x2="171.80" y2="379.26" stroke="#666666" stroke-width="0.45" />
<line x1="164.00" y1="381.54" x2="172.00" y2="381.54" stroke="#6a6a6a" stroke-width="0.5" />
<text x="165.20" y="386.14" font-size="3.8" fill="#9a9a9a" >8</text>
<line x1="170.40" y1="383.82" x2="171.80" y2="383.82" stroke="#666666" stroke-width="0.45" />
<line x1="170.40" y1="386.10" x2="171.80" y2="386.10" stroke="#666666" stroke-width="0.45" />
<line x1="170.40" y1="388.37" x2="171.80" y2="388.37" stroke="#666666" stroke-width="0.45" />
<line x1="170.40" y1="390.65" x2="171.80" y2="390.65" stroke="#666666" stroke-width="0.45" />
<line x1="169.40" y1="392.93" x2="171.80" y2="392.93" stroke="#666666" stroke-width="0.45" />
<line x1="170.40" y1="395.21" x2="171.80" y2="395.21" stroke="#666666" stroke-width="0.45" />
<line x1="170.40" y1="397.49" x2="171.80" y2="397.49" stroke="#666666" stroke-width="0.45" />
<line x1="170.40" y1="399.76" x2="171.80" y2="399.76" stroke="#666666" stroke-width="0.45" />
<line x1="170.40" y1="402.04" x2="171.80" y2="402.04" stroke="#666666" stroke-width="0.45" />
<line x1="164.00" y1="404.32" x2="172.00" y2="404.32" stroke="#6a6a6a" stroke-width="0.5" />
<text x="165.20" y="408.92" font-size="3.8" fill="#9a9a9a" >9</text>
<line x1="170.40" y1="406.60" x2="171.80" y2="406.60" stroke="#666666" stroke-width="0.45" />
<line x1="170.40" y1="408.88" x2="171.80" y2="408.88" stroke="#666666" stroke-width="0.45" />
<line x1="170.40" y1="411.15" x2="171.80" y2="411.15" stroke="#666666" stroke-width="0.45" />
<line x1="170.40" y1="413.43" x2="171.80" y2="413.43" stroke="#666666" stroke-width="0.45" />
<line x1="169.40" y1="415.71" x2="171.80" y2="415.71" stroke="#666666" stroke-width="0.45" />
<line x1="170.40" y1="417.99" x2="171.80" y2="417.99" stroke="#666666" stroke-width="0.45" />
<line x1="170.40" y1="420.27" x2="171.80" y2="420.27" stroke="#666666" stroke-width="0.45" />
<line x1="170.40" y1="422.54" x2="171.80" y2="422.54" stroke="#666666" stroke-width="0.45" />
<line x1="170.40" y1="424.82" x2="171.80" y2="424.82" stroke="#666666" stroke-width="0.45" />
<line x1="164.00" y1="427.10" x2="172.00" y2="427.10" stroke="#6a6a6a" stroke-width="0.5" />
<text x="165.20" y="431.70" font-size="3.8" fill="#9a9a9a" >10</text>
<line x1="170.40" y1="429.38" x2="171.80" y2="429.38" stroke="#666666" stroke-width="0.45" />
<line x1="170.40" y1="431.66" x2="171.80" y2="431.66" stroke="#666666" stroke-width="0.45" />
<line x1="170.40" y1="433.93" x2="171.80" y2="433.93" stroke="#666666" stroke-width="0.45" />
<line x1="170.40" y1="436.21" x2="171.80" y2="436.21" stroke="#666666" stroke-width="0.45" />
<line x1="169.40" y1="438.49" x2="171.80" y2="438.49" stroke="#666666" stroke-width="0.45" />
<line x1="170.40" y1="440.77" x2="171.80" y2="440.77" stroke="#666666" stroke-width="0.45" />
<line x1="170.40" y1="443.05" x2="171.80" y2="443.05" stroke="#666666" stroke-width="0.45" />
<line x1="170.40" y1="445.32" x2="171.80" y2="445.32" stroke="#666666" stroke-width="0.45" />
<line x1="170.40" y1="447.60" x2="171.80" y2="447.60" stroke="#666666" stroke-width="0.45" />
<line x1="164.00" y1="449.88" x2="172.00" y2="449.88" stroke="#6a6a6a" stroke-width="0.5" />
<text x="165.20" y="454.48" font-size="3.8" fill="#9a9a9a" >11</text>
<line x1="170.40" y1="452.16" x2="171.80" y2="452.16" stroke="#666666" stroke-width="0.45" />
<line x1="170.40" y1="454.44" x2="171.80" y2="454.44" stroke="#666666" stroke-width="0.45" />
<line x1="170.40" y1="456.71" x2="171.80" y2="456.71" stroke="#666666" stroke-width="0.45" />
<line x1="170.40" y1="458.99" x2="171.80" y2="458.99" stroke="#666666" stroke-width="0.45" />
<line x1="169.40" y1="461.27" x2="171.80" y2="461.27" stroke="#666666" stroke-width="0.45" />
<rect x="164.60" y="156.50" width="7.40" height="7.90" fill="#2a2a2a" />
<rect x="662.60" y="156.50" width="6.60" height="314.50" fill="#2a2a2a" />
<rect x="669.20" y="144.80" width="0.90" height="326.00" fill="#1c1c1c" />
<rect x="164.60" y="463.20" width="497.40" height="7.60" fill="#272727" />
<rect x="184.40" y="463.20" width="78.30" height="7.60" fill="#303030" />
<rect x="164.60" y="463.20" width="19.80" height="7.60" fill="#262626" />
<rect x="662.00" y="463.20" width="7.20" height="7.60" fill="#2c2c2c" />
<text x="166.50" y="468.60" font-size="4.3" fill="#dcdcdc" textLength="15.50" lengthAdjust="spacingAndGlyphs" >16,67 %</text>
<text x="200.00" y="468.80" font-size="4.3" fill="#b8b8b8" textLength="42.00" lengthAdjust="spacingAndGlyphs" >Doc : 45,8 Mo/0 octets</text>
<text x="259.00" y="469.00" font-size="5" fill="#9c9c9c" >›</text>
<rect x="303.00" y="199.30" width="227.80" height="228.00" fill="#ffffff" />
<rect x="147.50" y="118.00" width="0.80" height="369.60" fill="#222222" />
<rect x="148.00" y="235.00" width="16.00" height="10.80" fill="#1c1c1c" />
<path d="M155.3,160.1 V164.9 M152.9,162.5 H157.70000000000002" stroke="#d6d6d6" stroke-width="1.1" fill="none"/><path d="M153.8,160.5 L155.3,158.9 L156.8,160.5 Z M153.8,164.5 L155.3,166.1 L156.8,164.5 Z M153.3,161.0 L151.70000000000002,162.5 L153.3,164.0 Z M157.3,161.0 L158.9,162.5 L157.3,164.0 Z" fill="#d6d6d6"/>
<rect x="151.70000000000002" y="171.2" width="7.2" height="5.6" fill="none" stroke="#d6d6d6" stroke-width="0.8" stroke-dasharray="1.3 0.8"/>
<ellipse cx="155.60000000000002" cy="184.2" rx="3.4" ry="2.4" fill="none" stroke="#d6d6d6" stroke-width="0.9"/><path d="M153.3,186 q-1.2,1.6 0.4,2.6" stroke="#d6d6d6" stroke-width="0.8" fill="none"/>
<path d="M151.9,199.4 L156.3,195" stroke="#d6d6d6" stroke-width="1.3"/><path d="M157.9,192.4 v2 M156.9,193.4 h2 M154.70000000000002,192.6 l0.9,0.9 M158.9,196.2 l-0.9,-0.9" stroke="#d6d6d6" stroke-width="0.7"/>
<path d="M153.3,203.2 V209 H159.10000000000002 M151.5,205 H157.3 V210.8" stroke="#d6d6d6" stroke-width="0.9" fill="none"/>
<path d="M151.9,221.4 L155.9,217.4" stroke="#d6d6d6" stroke-width="1.2"/><path d="M155.70000000000002,215.6 L157.70000000000002,217.6" stroke="#d6d6d6" stroke-width="1"/><circle cx="157.60000000000002" cy="215.7" r="1.3" fill="#d6d6d6"/>
<rect x="151.3" y="227.4" width="8" height="3.2" rx="1.4" fill="#d6d6d6" transform="rotate(-45 155.3 229)"/><rect x="154.3" y="228" width="2" height="2" fill="#444" transform="rotate(-45 155.3 229)"/>
<path d="M158.70000000000002,236.70000000000002 L154.70000000000002,240.9" stroke="#f2f2f2" stroke-width="1.3"/><path d="M154.5,240.70000000000002 q-2.6,0.4 -2.8,3.2 q2.6,0 3.6,-2.2 z" fill="#f2f2f2"/>
<path d="M151.9,255.1 h6.8 v-1.6 h-6.8 z M152.70000000000002,252.7 h5.2 l-1.4,-1.6 v-1 a1.7,1.7 0 1 0 -2.4,0 v1 z" fill="#d6d6d6"/>
<path d="M158.70000000000002,259.4 L155.10000000000002,263.2" stroke="#d6d6d6" stroke-width="1.2"/><path d="M154.70000000000002,263.2 q-2.4,0.4 -2.6,3 q2.4,0 3.4,-2 z" fill="#d6d6d6"/><path d="M151.70000000000002,261.8 a2.4,2.4 0 0 1 3.6,-2" stroke="#d6d6d6" stroke-width="0.7" fill="none"/>
<path d="M151.70000000000002,275.2 L155.9,271 L158.9,274 L155.70000000000002,277.2 H153.5 Z" fill="#d6d6d6"/><path d="M151.5,277.6 H159.10000000000002" stroke="#d6d6d6" stroke-width="0.6"/>
<path d="M152.10000000000002,285.4 L155.5,282 L158.70000000000002,285.4 L155.3,288.4 Z" fill="none" stroke="#d6d6d6" stroke-width="0.9"/><path d="M152.3,285.8 L158.3,285.8 L155.3,288.4 Z" fill="#d6d6d6"/><circle cx="158.8" cy="287.8" r="0.8" fill="#d6d6d6"/>
<path d="M153.5,299.8 V296.8 q-1.8,-0.4 -1.4,-2.4 q0.2,-1.8 2.8,-2 q3.2,0 3.4,2 q0.2,1.8 -2,2.4 V299.8 Z" fill="#d6d6d6"/>
<circle cx="156.5" cy="306.3" r="2.4" fill="#d6d6d6"/><path d="M154.70000000000002,308.1 L151.9,311.1" stroke="#d6d6d6" stroke-width="1.3"/>
<path d="M151.70000000000002,322.1 L153.10000000000002,317.9 L156.5,315.5 L158.5,317.5 L156.10000000000002,320.9 Z" fill="none" stroke="#d6d6d6" stroke-width="0.8"/><circle cx="155.5" cy="318.3" r="0.7" fill="#d6d6d6"/>
<text x="155.30" y="332.90" font-size="9.5" fill="#d6d6d6" text-anchor="middle" font-family="Liberation Serif, serif" font-weight="bold">T</text>
<path d="M153.3,336.7 L153.3,343.1 L154.9,341.7 L156.10000000000002,344.3 L157.10000000000002,343.8 L156.0,341.3 L158.10000000000002,341.1 Z" fill="#d6d6d6"/>
<rect x="151.70000000000002" y="348.7" width="7.2" height="5.6" fill="#555" stroke="#d6d6d6" stroke-width="0.9"/>
<path d="M152.70000000000002,366.3 q-1.8,-2.6 -1.2,-3.6 q0.8,-0.4 1.6,1 V360.1 q0.6,-1 1.2,0 V359.3 q0.6,-1 1.2,0 V359.9 q0.6,-0.9 1.2,0 V361.1 q0.7,-0.8 1.2,0.2 V363.9 q0,1.6 -1,2.4 Z" fill="#d6d6d6"/>
<circle cx="154.5" cy="372.7" r="2.5" fill="none" stroke="#d6d6d6" stroke-width="1"/><path d="M156.3,374.5 L158.9,377.1" stroke="#d6d6d6" stroke-width="1.3"/>
<circle cx="152.9" cy="384.5" r="0.7" fill="#d6d6d6"/><circle cx="155.3" cy="384.5" r="0.7" fill="#d6d6d6"/><circle cx="157.70000000000002" cy="384.5" r="0.7" fill="#d6d6d6"/>
<path d="M160.3,178.4 l-1.2,0 l1.2,-1.2 z" fill="#9a9a9a"/>
<path d="M160.3,189.4 l-1.2,0 l1.2,-1.2 z" fill="#9a9a9a"/>
<path d="M160.3,200.4 l-1.2,0 l1.2,-1.2 z" fill="#9a9a9a"/>
<path d="M160.3,211.4 l-1.2,0 l1.2,-1.2 z" fill="#9a9a9a"/>
<path d="M160.3,222.4 l-1.2,0 l1.2,-1.2 z" fill="#9a9a9a"/>
<path d="M160.3,233.4 l-1.2,0 l1.2,-1.2 z" fill="#9a9a9a"/>
<path d="M160.3,244.70000000000002 l-1.2,0 l1.2,-1.2 z" fill="#9a9a9a"/>
<path d="M160.3,256.09999999999997 l-1.2,0 l1.2,-1.2 z" fill="#9a9a9a"/>
<path d="M160.3,267.4 l-1.2,0 l1.2,-1.2 z" fill="#9a9a9a"/>
<path d="M160.3,278.4 l-1.2,0 l1.2,-1.2 z" fill="#9a9a9a"/>
<path d="M160.3,289.4 l-1.2,0 l1.2,-1.2 z" fill="#9a9a9a"/>
<path d="M160.3,300.4 l-1.2,0 l1.2,-1.2 z" fill="#9a9a9a"/>
<path d="M160.3,311.9 l-1.2,0 l1.2,-1.2 z" fill="#9a9a9a"/>
<path d="M160.3,322.9 l-1.2,0 l1.2,-1.2 z" fill="#9a9a9a"/>
<path d="M160.3,344.9 l-1.2,0 l1.2,-1.2 z" fill="#9a9a9a"/>
<path d="M160.3,355.9 l-1.2,0 l1.2,-1.2 z" fill="#9a9a9a"/>
<path d="M160.3,366.9 l-1.2,0 l1.2,-1.2 z" fill="#9a9a9a"/>
<rect x="150.8" y="392.6" width="2.2" height="2.2" fill="#111" stroke="#ddd" stroke-width="0.4"/><rect x="152" y="393.8" width="2.2" height="2.2" fill="#eee"/>
<path d="M157.4,393 q2.2,-0.6 2.6,2.6 M156.8,392.2 l0.2,1.6 l1.4,-0.6 M159.2,396.2 l0.8,-1 l0.8,1" stroke="#ddd" stroke-width="0.5" fill="none"/>
<rect x="154.5" y="403.8" width="7" height="7" fill="#ffffff" stroke="#8a8a8a" stroke-width="0.4"/>
<rect x="150.3" y="399.6" width="7" height="7" fill="#000000" stroke="#d8d8d8" stroke-width="0.6"/>
<rect x="151.6" y="417" width="7.4" height="5.6" fill="none" stroke="#d6d6d6" stroke-width="0.8"/><circle cx="155.3" cy="419.8" r="1.4" fill="none" stroke="#d6d6d6" stroke-width="0.7"/>
<rect x="153" y="427.6" width="6.6" height="4.6" fill="none" stroke="#d6d6d6" stroke-width="0.8"/><rect x="151.2" y="429.6" width="6.6" height="4.6" fill="#2f2f2f" stroke="#d6d6d6" stroke-width="0.8"/>
<rect x="151.2" y="120.6" width="6.8" height="6" fill="#0a1a26" stroke="#29b6e6" stroke-width="0.9"/>
<text x="154.60" y="125.60" font-size="4" fill="#29b6e6" text-anchor="middle" font-weight="bold" >Ps</text>
<text x="166.60" y="126.10" font-size="5.6" fill="#d2d2d2" textLength="15.40" lengthAdjust="spacingAndGlyphs" >Fichier</text>
<text x="187.60" y="126.10" font-size="5.6" fill="#d2d2d2" textLength="16.80" lengthAdjust="spacingAndGlyphs" >Edition</text>
<text x="209.60" y="126.10" font-size="5.6" fill="#d2d2d2" textLength="14.80" lengthAdjust="spacingAndGlyphs" >Image</text>
<text x="230.00" y="126.10" font-size="5.6" fill="#d2d2d2" textLength="16.00" lengthAdjust="spacingAndGlyphs" >Calque</text>
<text x="252.00" y="126.10" font-size="5.6" fill="#d2d2d2" textLength="12.40" lengthAdjust="spacingAndGlyphs" >Texte</text>
<text x="270.00" y="126.10" font-size="5.6" fill="#d2d2d2" textLength="21.00" lengthAdjust="spacingAndGlyphs" >Sélection</text>
<text x="296.60" y="126.10" font-size="5.6" fill="#d2d2d2" textLength="11.40" lengthAdjust="spacingAndGlyphs" >Filtre</text>
<text x="314.00" y="126.10" font-size="5.6" fill="#d2d2d2" textLength="7.00" lengthAdjust="spacingAndGlyphs" >3D</text>
<text x="327.00" y="126.10" font-size="5.6" fill="#d2d2d2" textLength="22.70" lengthAdjust="spacingAndGlyphs" >Affichage</text>
<text x="355.00" y="126.10" font-size="5.6" fill="#d2d2d2" textLength="17.40" lengthAdjust="spacingAndGlyphs" >Fenêtre</text>
<text x="378.60" y="126.10" font-size="5.6" fill="#d2d2d2" textLength="10.40" lengthAdjust="spacingAndGlyphs" >Aide</text>
<line x1="762.50" y1="123.20" x2="767.00" y2="123.20" stroke="#a8a8a8" stroke-width="0.9" />
<path d="M774.4,121.8 h3.6 v3.4 h-3.6 z M775.6,121.8 v-1.2 h3.6 v3.4 h-1.2" fill="none" stroke="#b8b8b8" stroke-width="0.7"/>
<path d="M790.9,120.4 l4,4 M794.9,120.4 l-4,4" stroke="#c4c4c4" stroke-width="0.8"/>
<path d="M162.2,133.4 L158.2,137.8" stroke="#ececec" stroke-width="1.3"/><path d="M158.2,137.4 q-2.4,0.4 -2.8,3.2 q2.6,0 3.6,-2.2 z" fill="#ececec"/>
<path d="M167.2,137.6 l1.4,1.4 l1.4,-1.4" stroke="#9a9a9a" stroke-width="0.6" fill="none"/>
<line x1="173.50" y1="132.00" x2="173.50" y2="143.00" stroke="#3c3c3c" stroke-width="0.6" />
<circle cx="183.4" cy="134.7" r="3.5" fill="#ffffff"/>
<text x="183.40" y="142.80" font-size="4.2" fill="#c8c8c8" text-anchor="middle" >105</text>
<path d="M191,135.8 l1.4,1.4 l1.4,-1.4" stroke="#9a9a9a" stroke-width="0.6" fill="none"/>
<rect x="199" y="133.8" width="7.4" height="7.2" fill="#e8e8e8"/><path d="M205,134.8 L202.2,137.8" stroke="#222" stroke-width="1"/><path d="M202.2,137.6 q-1.6,0.3 -1.8,2.2 q1.8,0 2.4,-1.5 z" fill="#222"/><path d="M199.6,136.2 q1,-1.6 2.2,-1.6" stroke="#222" stroke-width="0.6" fill="none"/>
<text x="213.60" y="139.00" font-size="4.7" fill="#a6a6a6" textLength="13.40" lengthAdjust="spacingAndGlyphs" >Mode :</text>
<rect x="230.00" y="133.60" width="54.40" height="7.20" fill="#262626" />
<text x="233.00" y="139.00" font-size="4.5" fill="#ececec" textLength="14.00" lengthAdjust="spacingAndGlyphs" >Normal</text>
<path d="M279.6,136.6 l1.4,1.4 l1.4,-1.4" stroke="#9a9a9a" stroke-width="0.6" fill="none"/>
<text x="290.60" y="139.00" font-size="4.7" fill="#a6a6a6" textLength="18.00" lengthAdjust="spacingAndGlyphs" >Opacité :</text>
<rect x="310.80" y="133.60" width="16.40" height="7.20" fill="#262626" />
<text x="312.20" y="139.00" font-size="4.5" fill="#e4e4e4" textLength="13.40" lengthAdjust="spacingAndGlyphs" >100 %</text>
<rect x="327.80" y="133.60" width="5.90" height="7.20" fill="#282828" />
<path d="M329.4,136.6 l1.4,1.4 l1.4,-1.4" stroke="#8a8a8a" stroke-width="0.6" fill="none"/>
<circle cx="342" cy="137.8" r="2.8" fill="none" stroke="#d0d0d0" stroke-width="0.8"/><path d="M345.2,133.6 L341.6,138.4" stroke="#d0d0d0" stroke-width="1"/>
<line x1="350.50" y1="132.00" x2="350.50" y2="143.00" stroke="#3c3c3c" stroke-width="0.6" />
<text x="354.70" y="139.00" font-size="4.7" fill="#a6a6a6" textLength="10.10" lengthAdjust="spacingAndGlyphs" >Flux :</text>
<rect x="367.30" y="133.60" width="16.40" height="7.20" fill="#262626" />
<text x="368.60" y="139.00" font-size="4.5" fill="#e4e4e4" textLength="13.40" lengthAdjust="spacingAndGlyphs" >100 %</text>
<rect x="384.30" y="133.60" width="5.90" height="7.20" fill="#282828" />
<path d="M385.9,136.6 l1.4,1.4 l1.4,-1.4" stroke="#8a8a8a" stroke-width="0.6" fill="none"/>
<path d="M395.6,136 q2.6,-2.4 4.4,0 q0.6,2.6 -2.2,3.6 q-3,-0.6 -2.2,-3.6 z M400.4,135.6 l2.4,-2 M398.4,140.4 h4.6" stroke="#d0d0d0" stroke-width="0.8" fill="none"/>
<line x1="407.00" y1="132.00" x2="407.00" y2="143.00" stroke="#3c3c3c" stroke-width="0.6" />
<text x="411.00" y="139.00" font-size="4.7" fill="#a6a6a6" textLength="14.40" lengthAdjust="spacingAndGlyphs" >Lissage :</text>
<rect x="431.00" y="133.60" width="15.50" height="7.20" fill="#262626" />
<text x="432.40" y="139.00" font-size="4.5" fill="#e4e4e4" textLength="7.60" lengthAdjust="spacingAndGlyphs" >0 %</text>
<rect x="447.10" y="133.60" width="5.60" height="7.20" fill="#282828" />
<path d="M448.5,136.6 l1.4,1.4 l1.4,-1.4" stroke="#8a8a8a" stroke-width="0.6" fill="none"/>
<circle cx="461" cy="137.4" r="2.2" fill="none" stroke="#d8d8d8" stroke-width="1.5" stroke-dasharray="1.1 0.65"/><circle cx="461" cy="137.4" r="1.5" fill="none" stroke="#d8d8d8" stroke-width="0.9"/>
<rect x="471.00" y="133.00" width="9.70" height="9.80" fill="#222222" />
<circle cx="476" cy="137.8" r="2.8" fill="none" stroke="#d0d0d0" stroke-width="0.8"/><path d="M479.2,133.6 L475.6,138.4" stroke="#d0d0d0" stroke-width="1"/>
<circle cx="765.2" cy="136.6" r="2.3" fill="none" stroke="#d8d8d8" stroke-width="0.9"/><path d="M763.6,138.4 L761.2,141" stroke="#d8d8d8" stroke-width="1"/>
<rect x="773.2" y="135" width="7.4" height="5.6" fill="none" stroke="#c8c8c8" stroke-width="0.8"/><rect x="774" y="136.4" width="2.4" height="3.6" fill="#b0b0b0"/>
<path d="M785,137 l1.3,1.3 l1.3,-1.3" stroke="#8a8a8a" stroke-width="0.6" fill="none"/>
<path d="M794.6,136.6 h-1.4 v4.6 h6.4 v-4.6 h-1.4 M796.4,139 v-5.4 M794.8,135 l1.6,-1.6 l1.6,1.6" fill="none" stroke="#d0d0d0" stroke-width="0.8"/>
<rect x="670.00" y="150.00" width="16.40" height="321.00" fill="#2f2f2f" />
<rect x="670.00" y="145.00" width="16.40" height="5.00" fill="#242424" />
<text x="680.60" y="149.20" font-size="4.4" fill="#d0d0d0" >»</text>
<line x1="671.00" y1="167.20" x2="686.00" y2="167.20" stroke="#252525" stroke-width="0.7" />
<line x1="671.00" y1="185.40" x2="686.00" y2="185.40" stroke="#252525" stroke-width="0.7" />
<line x1="671.00" y1="214.40" x2="686.00" y2="214.40" stroke="#252525" stroke-width="0.7" />
<path d="M675,152.4 h6" stroke="#444" stroke-width="0.6" stroke-dasharray="0.6 0.5"/>
<path d="M675,169.8 h6" stroke="#444" stroke-width="0.6" stroke-dasharray="0.6 0.5"/>
<path d="M675,187.6 h6" stroke="#444" stroke-width="0.6" stroke-dasharray="0.6 0.5"/>
<path d="M674.7,162.4 h7.6 v-1.6 h-7.6 z M674.9,160.2 l0.6,-2.4 l0.9,1.6 l0.7,-2.6 l0.9,2.2 l0.7,-2.8 l0.8,2.8 l0.8,-2 l0.8,2.4 l0.6,-1.6 l0.6,2.4 z" fill="#dcdcdc"/>
<circle cx="677.1" cy="176" r="1.9" fill="#dcdcdc"/><rect x="679.7" y="174.3" width="2.4" height="1.2" fill="#dcdcdc"/><rect x="679.7" y="176.3" width="2.4" height="1.2" fill="#dcdcdc"/><rect x="674.9" y="179" width="7.2" height="1.5" fill="#dcdcdc"/><rect x="674.9" y="181.3" width="7.2" height="0.8" fill="#dcdcdc"/>
<rect x="674.5" y="192" width="2.2" height="2.2" fill="none" stroke="#9a9a9a" stroke-width="0.5"/><path d="M682.5,193 L678.9,196.8" stroke="#e4e4e4" stroke-width="1.2"/><path d="M678.7,196.6 q-2.2,0.4 -2.6,2.8 q2.4,0.1 3.4,-1.8 z" fill="#e4e4e4"/>
<path d="M674.5,205.4 h8 M674.5,208.8 h8" stroke="#dcdcdc" stroke-width="1"/><path d="M674.5,204.2 l2.6,0 l-1.3,-1.4z" fill="#dcdcdc"/><circle cx="681.5" cy="208.8" r="1.5" fill="#dcdcdc"/>
<rect x="686.40" y="145.00" width="1.60" height="326.00" fill="#1f1f1f" />
<rect x="688.00" y="145.00" width="115.60" height="5.00" fill="#242424" />
<text x="798.20" y="149.20" font-size="4.4" fill="#c0c0c0" >»</text>
<rect x="688.00" y="150.00" width="115.60" height="12.00" fill="#262626" />
<rect x="688.00" y="150.40" width="29.00" height="11.60" fill="#2f2f2f" />
<text x="691.60" y="158.00" font-size="4.4" fill="#e8e8e8" textLength="21.00" lengthAdjust="spacingAndGlyphs" font-weight="bold" >Navigation</text>
<line x1="796.10" y1="154.60" x2="800.50" y2="154.60" stroke="#8a8a8a" stroke-width="0.7" />
<line x1="796.10" y1="156.00" x2="800.50" y2="156.00" stroke="#8a8a8a" stroke-width="0.7" />
<line x1="796.10" y1="157.40" x2="800.50" y2="157.40" stroke="#8a8a8a" stroke-width="0.7" />
<rect x="688.00" y="162.00" width="115.60" height="70.60" fill="#2f2f2f" />
<rect x="718.7" y="164.9" width="53" height="53" fill="#ffffff" stroke="#e0443e" stroke-width="0.9"/>
<rect x="688.00" y="220.60" width="23.60" height="10.60" fill="#2a2a2a" />
<text x="690.00" y="227.60" font-size="4.2" fill="#c8c8c8" textLength="16.40" lengthAdjust="spacingAndGlyphs" >16,67 %</text>
<path d="M714.6,228.4 h4 l-1.4,-1.6 h-1.2 z" fill="#d0d0d0"/>
<line x1="725.00" y1="224.80" x2="782.00" y2="224.80" stroke="#5c5c5c" stroke-width="0.7" />
<path d="M744,229.6 h5 l-2.5,-3.8 z" fill="#ececec"/>
<path d="M786.6,228.4 h6.8 l-1.2,-1.4 l-1,0.6 l-1.2,-2.2 l-1.4,2 z" fill="#d8d8d8"/>
<rect x="688.00" y="231.60" width="115.60" height="1.60" fill="#1f1f1f" />
<rect x="688.00" y="233.00" width="115.60" height="11.40" fill="#262626" />
<rect x="688.00" y="233.40" width="29.00" height="11.00" fill="#2f2f2f" />
<text x="691.60" y="240.60" font-size="4.4" fill="#e8e8e8" textLength="20.00" lengthAdjust="spacingAndGlyphs" font-weight="bold" >Historique</text>
<line x1="796.10" y1="237.20" x2="800.50" y2="237.20" stroke="#8a8a8a" stroke-width="0.7" />
<line x1="796.10" y1="238.60" x2="800.50" y2="238.60" stroke="#8a8a8a" stroke-width="0.7" />
<line x1="796.10" y1="240.00" x2="800.50" y2="240.00" stroke="#8a8a8a" stroke-width="0.7" />
<rect x="688.00" y="244.40" width="115.60" height="81.80" fill="#2f2f2f" />
<path d="M694.6,251.4 L691.6,254.8" stroke="#ececec" stroke-width="1"/><path d="M691.6,254.6 q-1.6,0.3 -1.8,2 q1.8,0 2.4,-1.4 z" fill="#ececec"/><path d="M690,252.4 a2,2 0 0 1 3,-1.6" stroke="#d0d0d0" stroke-width="0.6" fill="none"/>
<rect x="697.80" y="248.00" width="13.80" height="13.00" fill="#ffffff" />
<text x="714.00" y="255.20" font-size="4.2" fill="#c0c0c0" textLength="21.40" lengthAdjust="spacingAndGlyphs" >Sans titre-1</text>
<rect x="688.00" y="264.20" width="108.60" height="9.10" fill="#2f4760" />
<rect x="690.4" y="266.2" width="4.6" height="4.6" fill="none" stroke="#3c566e" stroke-width="0.5"/>
<path d="M701.4,266.2 h4.4 l1.6,1.4 v5 h-6 z" fill="#cfd6de"/><path d="M702.4,268.6 h4 M702.4,270 h4 M702.4,271.4 h4" stroke="#4a6078" stroke-width="0.5"/>
<text x="712.00" y="270.60" font-size="4.4" fill="#f0f0f0" textLength="17.40" lengthAdjust="spacingAndGlyphs" >Nouveau</text>
<rect x="690.4" y="275.90000000000003" width="4.6" height="4.6" fill="none" stroke="#404040" stroke-width="0.5"/>
<path d="M706.6,275.3 L703.6,278.90000000000003" stroke="#a8a8a8" stroke-width="0.9"/><path d="M703.8,278.5 q-1.6,0.3 -2,2.4 q1.8,-0.1 2.6,-1.6 z" fill="#a8a8a8"/>
<text x="712.40" y="279.90" font-size="4.3" fill="#7c7c7c" textLength="15.00" lengthAdjust="spacingAndGlyphs" font-style="italic" >Pinceau</text>
<line x1="688.00" y1="283.30" x2="796.50" y2="283.30" stroke="#2a2a2a" stroke-width="0.5" />
<rect x="690.4" y="285.70000000000005" width="4.6" height="4.6" fill="none" stroke="#404040" stroke-width="0.5"/>
<path d="M706.6,285.1 L703.6,288.70000000000005" stroke="#a8a8a8" stroke-width="0.9"/><path d="M703.8,288.3 q-1.6,0.3 -2,2.4 q1.8,-0.1 2.6,-1.6 z" fill="#a8a8a8"/>
<text x="712.40" y="289.70" font-size="4.3" fill="#7c7c7c" textLength="15.00" lengthAdjust="spacingAndGlyphs" font-style="italic" >Pinceau</text>
<line x1="688.00" y1="293.10" x2="796.50" y2="293.10" stroke="#2a2a2a" stroke-width="0.5" />
<rect x="690.4" y="295.40000000000003" width="4.6" height="4.6" fill="none" stroke="#404040" stroke-width="0.5"/>
<path d="M706.6,294.8 L703.6,298.40000000000003" stroke="#a8a8a8" stroke-width="0.9"/><path d="M703.8,298.0 q-1.6,0.3 -2,2.4 q1.8,-0.1 2.6,-1.6 z" fill="#a8a8a8"/>
<text x="712.40" y="299.40" font-size="4.3" fill="#7c7c7c" textLength="15.00" lengthAdjust="spacingAndGlyphs" font-style="italic" >Pinceau</text>
<line x1="688.00" y1="302.80" x2="796.50" y2="302.80" stroke="#2a2a2a" stroke-width="0.5" />
<rect x="690.4" y="305.20000000000005" width="4.6" height="4.6" fill="none" stroke="#404040" stroke-width="0.5"/>
<path d="M706.6,304.6 L703.6,308.20000000000005" stroke="#a8a8a8" stroke-width="0.9"/><path d="M703.8,307.8 q-1.6,0.3 -2,2.4 q1.8,-0.1 2.6,-1.6 z" fill="#a8a8a8"/>
<text x="712.40" y="309.20" font-size="4.3" fill="#7c7c7c" textLength="15.00" lengthAdjust="spacingAndGlyphs" font-style="italic" >Pinceau</text>
<line x1="688.00" y1="312.60" x2="796.50" y2="312.60" stroke="#2a2a2a" stroke-width="0.5" />
<rect x="797.60" y="246.00" width="4.80" height="68.60" fill="#282828" />
<rect x="798.00" y="253.40" width="4.00" height="39.00" fill="#4a4a4a" />
<path d="M798.8,251.4 l1.2,-1.2 l1.2,1.2 M798.8,310 l1.2,1.2 l1.2,-1.2" stroke="#8a8a8a" stroke-width="0.5" fill="none"/>
<line x1="688.00" y1="314.60" x2="803.60" y2="314.60" stroke="#272727" stroke-width="0.6" />
<path d="M759.4,322.6 h3.6 v-3 h2.6 v5 h-4.8 z M759.4,320.4 l2,-1.6 v3.2 z" fill="#dcdcdc"/>
<rect x="772.8" y="318.8" width="6.4" height="4.8" rx="0.6" fill="#dcdcdc"/><circle cx="776" cy="321.2" r="1.4" fill="#2f2f2f"/>
<path d="M786.6,319.2 h5 M787.2,319.6 l0.4,4.8 h3 l0.4,-4.8 M788.2,319 v-0.8 h1.8 v0.8" fill="none" stroke="#9a9a9a" stroke-width="0.7"/>
<rect x="688.00" y="326.20" width="115.60" height="1.80" fill="#1f1f1f" />
<rect x="688.00" y="328.00" width="115.60" height="10.80" fill="#262626" />
<rect x="688.00" y="328.40" width="23.40" height="10.40" fill="#2f2f2f" />
<text x="691.00" y="335.40" font-size="4.4" fill="#ececec" textLength="15.60" lengthAdjust="spacingAndGlyphs" font-weight="bold" >Calques</text>
<text x="715.00" y="335.40" font-size="4.4" fill="#a0a0a0" textLength="16.20" lengthAdjust="spacingAndGlyphs" >Couches</text>
<text x="740.20" y="335.40" font-size="4.4" fill="#a0a0a0" textLength="12.40" lengthAdjust="spacingAndGlyphs" >Tracés</text>
<line x1="736.00" y1="329.00" x2="736.00" y2="338.80" stroke="#2e2e2e" stroke-width="0.6" />
<line x1="757.40" y1="329.00" x2="757.40" y2="338.80" stroke="#2e2e2e" stroke-width="0.6" />
<line x1="796.10" y1="332.00" x2="800.50" y2="332.00" stroke="#8a8a8a" stroke-width="0.7" />
<line x1="796.10" y1="333.40" x2="800.50" y2="333.40" stroke="#8a8a8a" stroke-width="0.7" />
<line x1="796.10" y1="334.80" x2="800.50" y2="334.80" stroke="#8a8a8a" stroke-width="0.7" />
<rect x="688.00" y="338.80" width="115.60" height="132.00" fill="#2f2f2f" />
<rect x="689.30" y="343.20" width="43.80" height="7.00" fill="#272727" />
<circle cx="693.2" cy="346.2" r="1.4" fill="none" stroke="#8a8a8a" stroke-width="0.6"/><path d="M692.2,347.4 l-1.2,1.4" stroke="#8a8a8a" stroke-width="0.6"/>
<text x="699.00" y="348.40" font-size="4.2" fill="#9a9a9a" textLength="9.00" lengthAdjust="spacingAndGlyphs" >Type</text>
<path d="M728.6,346 l1.2,1.2 l1.2,-1.2" stroke="#7a7a7a" stroke-width="0.5" fill="none"/>
<rect x="742.2" y="344.2" width="5.6" height="4.6" fill="none" stroke="#b4b4b4" stroke-width="0.7"/><path d="M743,348 l1.4,-1.8 l1,1 l0.8,-0.8 l1,1.6 z" fill="#b4b4b4"/>
<circle cx="755.2" cy="346.6" r="2.4" fill="none" stroke="#b4b4b4" stroke-width="0.7"/><path d="M755.2,344.2 a2.4,2.4 0 0 1 0,4.8 z" fill="#b4b4b4"/>
<text x="765.60" y="349.40" font-size="6.4" fill="#c0c0c0" text-anchor="middle" font-family="Liberation Serif, serif" font-weight="bold">T</text>
<path d="M773.4,344.6 h4.6 v4.2 h-4.6 z M772.6,344.6 h6.2 M772.6,348.8 h6.2 M773.4,343.8 v5.8 M778,343.8 v5.8" fill="none" stroke="#b4b4b4" stroke-width="0.6"/>
<path d="M784.4,346.4 h4.2 v3 h-4.2 z" fill="#b4b4b4"/><path d="M785.4,346.4 v-1 a1.3,1.3 0 0 1 2.6,0" fill="none" stroke="#b4b4b4" stroke-width="0.6"/><path d="M787,344 l2.4,1.6 v2" stroke="#b4b4b4" stroke-width="0.5" fill="none"/>
<circle cx="799.6" cy="344.8" r="1.7" fill="#c8c8c8"/><path d="M799.6,346.4 v3.4" stroke="#5a5a5a" stroke-width="0.8"/>
<rect x="689.30" y="355.20" width="65.60" height="7.00" fill="#292929" />
<text x="692.60" y="360.40" font-size="4.2" fill="#808080" textLength="13.40" lengthAdjust="spacingAndGlyphs" >Normal</text>
<path d="M750.6,358.2 l1.2,1.2 l1.2,-1.2" stroke="#6a6a6a" stroke-width="0.5" fill="none"/>
<text x="759.00" y="360.20" font-size="4.3" fill="#8c8c8c" textLength="18.00" lengthAdjust="spacingAndGlyphs" >Opacité :</text>
<rect x="779.00" y="355.20" width="14.80" height="7.00" fill="#292929" />
<text x="780.00" y="360.40" font-size="4.2" fill="#808080" textLength="12.60" lengthAdjust="spacingAndGlyphs" >100 %</text>
<rect x="794.60" y="355.20" width="5.40" height="7.00" fill="#292929" />
<path d="M796,358.2 l1.2,1.2 l1.2,-1.2" stroke="#6a6a6a" stroke-width="0.5" fill="none"/>
<text x="690.00" y="372.60" font-size="4.3" fill="#7c7c7c" textLength="15.20" lengthAdjust="spacingAndGlyphs" >Verrou :</text>
<rect x="709.8" y="368.6" width="4.6" height="4.6" fill="none" stroke="#b4b4b4" stroke-width="0.6"/><path d="M709.8,368.6 h2.3 v2.3 h-2.3 z M712.1,370.9 h2.3 v2.3 h-2.3 z" fill="#b4b4b4"/>
<path d="M724.4,368 L721.4,371.4" stroke="#b8b8b8" stroke-width="0.9"/><path d="M721.6,371 q-1.6,0.3 -2,2.4 q1.8,-0.1 2.6,-1.6 z" fill="#b8b8b8"/>
<path d="M731,368.2 v5.6 M728.2,371 h5.6 M730,369.2 l1,-1.2 l1,1.2 M730,372.8 l1,1.2 l1,-1.2 M729.2,370 l-1.2,1 l1.2,1 M732.8,370 l1.2,1 l-1.2,1" stroke="#b4b4b4" stroke-width="0.6" fill="none"/>
<path d="M738.6,368.2 v5.2 h4.4 M737.4,369.4 h4.6 v4.8 M741.2,368 l1.4,0 l0,1.4" stroke="#b4b4b4" stroke-width="0.6" fill="none"/>
<rect x="748" y="370.6" width="4.2" height="3.2" fill="#c4c4c4"/><path d="M749,370.6 v-1 a1.1,1.1 0 0 1 2.2,0 v1" fill="none" stroke="#c4c4c4" stroke-width="0.6"/>
<text x="765.00" y="372.40" font-size="4.3" fill="#8c8c8c" textLength="12.00" lengthAdjust="spacingAndGlyphs" >Fond :</text>
<rect x="779.00" y="367.40" width="14.80" height="7.00" fill="#292929" />
<text x="780.00" y="372.60" font-size="4.2" fill="#808080" textLength="12.60" lengthAdjust="spacingAndGlyphs" >100 %</text>
<rect x="794.60" y="367.40" width="5.40" height="7.00" fill="#292929" />
<path d="M796,370.4 l1.2,1.2 l1.2,-1.2" stroke="#6a6a6a" stroke-width="0.5" fill="none"/>
<line x1="688.00" y1="377.60" x2="803.60" y2="377.60" stroke="#272727" stroke-width="0.6" />
<rect x="700.20" y="378.00" width="96.40" height="17.00" fill="#2f4760" />
<path d="M690.6,386.6 q3,-3.4 6.2,0 q-3.2,3.4 -6.2,0 z" fill="#e8e8e8"/><circle cx="693.7" cy="386.6" r="1.2" fill="#2f2f2f"/>
<rect x="702.20" y="380.00" width="13.20" height="13.00" fill="#ffffff" />
<text x="720.00" y="388.60" font-size="4.4" fill="#f0f0f0" textLength="22.40" lengthAdjust="spacingAndGlyphs" font-style="italic" >Arrière-plan</text>
<rect x="785.4" y="385.8" width="4.4" height="3.6" fill="none" stroke="#e0e0e0" stroke-width="0.7"/><path d="M786.4,385.8 v-1.2 a1.2,1.2 0 0 1 2.4,0 v1.2" fill="none" stroke="#e0e0e0" stroke-width="0.7"/>
<line x1="688.00" y1="395.20" x2="796.60" y2="395.20" stroke="#262626" stroke-width="0.6" />
<line x1="688.00" y1="459.40" x2="803.60" y2="459.40" stroke="#272727" stroke-width="0.6" />
<path d="M716.6,465 a1.3,1.3 0 0 1 2.6,0 M718.6,465 a1.3,1.3 0 0 0 2.6,0" stroke="#5e5e5e" stroke-width="0.7" fill="none"/><ellipse cx="717.8" cy="465" rx="1.7" ry="1.2" fill="none" stroke="#5e5e5e" stroke-width="0.6"/><ellipse cx="720.4" cy="465" rx="1.7" ry="1.2" fill="none" stroke="#5e5e5e" stroke-width="0.6"/>
<text x="731.00" y="466.80" font-size="5" fill="#5e5e5e" text-anchor="middle" font-style="italic" font-family="Liberation Serif, serif">fx</text>
<rect x="739.8" y="462.8" width="5.8" height="4.4" fill="#e4e4e4"/><circle cx="742.7" cy="465" r="1.3" fill="#2f2f2f"/>
<circle cx="754" cy="465" r="2.3" fill="none" stroke="#e4e4e4" stroke-width="0.7"/><path d="M754,462.7 a2.3,2.3 0 0 0 0,4.6 z" fill="#e4e4e4"/><path d="M757,467.6 l1,0 l-0.5,0.7z" fill="#aaa"/>
<path d="M762.6,463 h2.2 l0.6,0.8 h3.2 v3.6 h-6 z" fill="#e4e4e4"/>
<path d="M774.4,463 h5.4 v4.2 h-3.4 l-2,-1.6 z" fill="none" stroke="#e4e4e4" stroke-width="0.7"/><path d="M774.4,465.6 h2 v1.6" fill="none" stroke="#e4e4e4" stroke-width="0.6"/>
<path d="M786.6,463.2 h5 M787.2,463.6 l0.4,4.2 h3 l0.4,-4.2 M788.2,463 v-0.8 h1.8 v0.8" fill="none" stroke="#5e5e5e" stroke-width="0.7"/>
<rect x="147.50" y="470.50" width="656.10" height="17.10" fill="#0f0f0f" />
<path d="M153.8,476.9 l2.8,-0.4 v2.9 h-2.8 z M157.1,476.4 l3.8,-0.6 v3.6 h-3.8 z M153.8,479.9 h2.8 v2.9 l-2.8,-0.4 z M157.1,479.9 h3.8 v3.6 l-3.8,-0.6 z" fill="#ffffff"/>
<rect x="167.50" y="471.50" width="147.30" height="16.10" fill="#f3f3f3" />
<circle cx="176.4" cy="479.7" r="3.3" fill="none" stroke="#111" stroke-width="1.1"/>
<text x="185.00" y="481.90" font-size="5.9" fill="#4c4c4c" textLength="65.40" lengthAdjust="spacingAndGlyphs" >Taper ici pour rechercher</text>
<rect x="304.4" y="476.4" width="2.4" height="4.2" rx="1.2" fill="#555"/><path d="M303.4,479.6 a2.2,2.2 0 0 0 4.4,0 M305.6,481.8 v1.4" stroke="#555" stroke-width="0.5" fill="none"/>
<path d="M322.6,477 h4.2 v4.8 h-4.2 z" fill="none" stroke="#ededed" stroke-width="0.8"/><path d="M321,476.4 v6.2 M328.4,476.4 v2 M328.4,479.6 v3" stroke="#ededed" stroke-width="0.8"/>
<path d="M342.4,475.4 h3.4 l0.9,1 h5 v6.8 h-9.3 z" fill="#edc55a"/><rect x="342.4" y="477.4" width="9.3" height="5.8" fill="#f9dd8c"/><rect x="344.4" y="479.8" width="5.4" height="3.4" fill="#58a6e2"/>
<path d="M363.2,477.2 h9.8 l-0.5,6.6 h-8.8 z" fill="#f6f6f6"/><path d="M366,477.4 a2.1,2.6 0 0 1 4.2,0" stroke="#f2f2f2" stroke-width="0.8" fill="none"/><rect x="366" y="478.8" width="1.9" height="1.8" fill="#e84a2f"/><rect x="368.4" y="478.8" width="1.9" height="1.8" fill="#7ab800"/><rect x="366" y="481" width="1.9" height="1.8" fill="#2a9fe8"/><rect x="368.4" y="481" width="1.9" height="1.8" fill="#f7b500"/>
<rect x="384" y="474.4" width="10" height="9.8" fill="#000000"/>
<text x="389.00" y="482.40" font-size="8" fill="#d40812" text-anchor="middle" font-weight="bold" >N</text>
<rect x="400.30" y="470.50" width="20.30" height="17.10" fill="#3a3a3a" />
<path d="M407,476.6 h5 l-2.5,-2.4 z M407,483 h5 l-2.5,2.4 z M405.6,477.6 v4.4 l-2.2,-2.2 z" fill="#8a8a8a"/><path d="M406.6,477.2 h6.4 l2.4,2.6 l-2.4,2.6 h-6.4 z" fill="#f08a1c"/><path d="M412,478.8 h-3.4 v1.8 h2.6" stroke="#3a3a3a" stroke-width="0.7" fill="none"/>
<circle cx="434.30" cy="479.60" r="1.55" fill="#5fd11d"/>
<circle cx="433.51" cy="481.51" r="1.55" fill="#5fd11d"/>
<circle cx="431.60" cy="482.30" r="1.55" fill="#5fd11d"/>
<circle cx="429.69" cy="481.51" r="1.55" fill="#5fd11d"/>
<circle cx="428.90" cy="479.60" r="1.55" fill="#5fd11d"/>
<circle cx="429.69" cy="477.69" r="1.55" fill="#5fd11d"/>
<circle cx="431.60" cy="476.90" r="1.55" fill="#5fd11d"/>
<circle cx="433.51" cy="477.69" r="1.55" fill="#5fd11d"/>
<circle cx="431.6" cy="479.6" r="1.6" fill="#e9f53a"/>
<rect x="448.8" y="475" width="8.4" height="8" rx="1.6" fill="#8c9fe4"/><circle cx="451.4" cy="479.6" r="0.9" fill="#fff"/><circle cx="454.4" cy="479.6" r="0.9" fill="#fff"/><path d="M450.4,482 q2.5,1 5,0" stroke="#fff" stroke-width="0.6" fill="none"/>
<rect x="469.7" y="474.7" width="9" height="8.6" rx="0.8" fill="#3a0d0b" stroke="#c8261c" stroke-width="0.9"/><path d="M471.8,481.6 q2.4,-2.2 2.2,-5.2 q0.8,3.6 3.2,4.4 q-2.8,-0.4 -5.4,0.8 z" fill="none" stroke="#f0d8d6" stroke-width="0.6"/>
<circle cx="495.5" cy="479.2" r="4.7" fill="#e8453c"/><path d="M495.5,479.2 L491.45,476.8 A4.7,4.7 0 0 0 495.7,483.9 Z" fill="#3aa757"/><path d="M495.5,479.2 L495.7,483.9 A4.7,4.7 0 0 0 499.65,476.9 Z" fill="#fbc116"/><circle cx="495.5" cy="479.2" r="2.2" fill="#f4f4f4"/><circle cx="495.5" cy="479.2" r="1.6" fill="#4a8af4"/>
<rect x="511.4" y="473.8" width="10.4" height="10.2" fill="#f8b90c"/><rect x="514.2" y="476.6" width="4.6" height="4.6" fill="none" stroke="#fde39a" stroke-width="0.7"/><path d="M514.2,476.6 l4.6,4.6 M518.8,476.6 l-4.6,4.6" stroke="#fde39a" stroke-width="0.4"/><circle cx="522" cy="482.6" r="2.7" fill="#3c3c3c" stroke="#9a9a9a" stroke-width="0.5"/>
<text x="522.00" y="484.00" font-size="3.8" fill="#fff" text-anchor="middle" >1</text>
<rect x="533.6" y="474.6" width="8.8" height="8.8" fill="#0a1f2e" stroke="#2fb8ea" stroke-width="0.9"/>
<text x="538.00" y="481.30" font-size="5.2" fill="#2fb8ea" text-anchor="middle" font-weight="bold" >Ps</text>
<circle cx="684.2" cy="478.6" r="1.3" fill="none" stroke="#e0e0e0" stroke-width="0.6"/><path d="M682,483.4 q0,-3 2.2,-3 q2.2,0 2.2,3" fill="none" stroke="#e0e0e0" stroke-width="0.6"/><circle cx="687.4" cy="477.4" r="0.9" fill="none" stroke="#e0e0e0" stroke-width="0.5"/>
<path d="M697.8,481 l2.2,-2.2 l2.2,2.2" stroke="#e8e8e8" stroke-width="0.8" fill="none"/>
<path d="M707,478.6 h1.4 l2,-1.8 v6 l-2,-1.8 h-1.4 z" fill="none" stroke="#e0e0e0" stroke-width="0.6"/><path d="M711.6,478.2 q1,1.6 0,3.2" stroke="#e0e0e0" stroke-width="0.5" fill="none"/>
<rect x="716.8" y="477.6" width="7" height="4.4" fill="#e8e8e8"/><rect x="723.8" y="478.8" width="0.9" height="2" fill="#e8e8e8"/><path d="M717.6,477 l1.6,-1.4 h2 l-1.2,1.4" fill="#e8e8e8"/>
<path d="M727.6,482.6 l6,-6 v6 z" fill="none" stroke="#bdbdbd" stroke-width="0.6"/><path d="M729.6,482.6 l4,-4 v4 z" fill="#bdbdbd"/><path d="M727.4,477.4 l4.6,4.6" stroke="#bdbdbd" stroke-width="0.5"/>
<path d="M739.6,483 l1.2,-2.6 l4,-4 l1.6,1.6 l-4,4 z M742.6,477.2 q-1.4,-1 -2.6,0.4" fill="none" stroke="#dcdcdc" stroke-width="0.7"/>
<text x="765.30" y="478.00" font-size="4.6" fill="#f0f0f0" textLength="13.00" lengthAdjust="spacingAndGlyphs" text-anchor="middle" >00:43</text>
<text x="765.50" y="485.00" font-size="4.6" fill="#f0f0f0" textLength="27.00" lengthAdjust="spacingAndGlyphs" text-anchor="middle" >25/08/2018</text>
<path d="M787,476.8 h6.4 v4.6 h-3.8 l-1.4,1.4 v-1.4 h-1.2 z" fill="#f0f0f0"/><path d="M788.2,478.4 h4 M788.2,479.8 h3" stroke="#222" stroke-width="0.4"/><circle cx="793.6" cy="482.6" r="1.9" fill="#2a2a2a" stroke="#ccc" stroke-width="0.4"/>
<text x="793.60" y="483.80" font-size="2.8" fill="#fff" text-anchor="middle" >15</text>
<rect x="310.4" y="199.3" width="2.4" height="228" fill="#000" fill-opacity="0.13"/>
<rect x="312.90" y="157.80" width="325.00" height="269.80" fill="#f0f0f0" />
<rect x="312.90" y="157.80" width="325.00" height="14.07" fill="#ffffff" />
<path d="M317.80369999999994,162.6114 h3.2 l-1.6,-1.5 z M317.80369999999994,166.8114 h3.2 l-1.6,1.5 z M317.20369999999997,163.4114 v2.8 l-1.4,-1.4 z" fill="#8a8a8a"/><path d="M317.80369999999994,163.3114 h3.8 l1.4,1.5 l-1.4,1.5 h-3.8 z" fill="#f08a1c"/>
<text x="324.84" y="166.40" font-size="5.6" fill="#2a2a2a" textLength="34.20" lengthAdjust="spacingAndGlyphs" >Gaomon Tablet</text>
<path d="M628.5006,162.7576 l4.2,4.2 M632.7006,162.7576 l-4.2,4.2" stroke="#333" stroke-width="0.6"/>
<path d="M313.58,185.69 V172.68 H408.74" fill="none" stroke="#b4b4b4" stroke-width="0.5"/>
<path d="M313.58,185.69 H408.74 V172.68" fill="none" stroke="#ffffff" stroke-width="0.7"/>
<text x="361.16" y="180.79" font-size="4.5" fill="#2a2a2a" textLength="31.60" lengthAdjust="spacingAndGlyphs" text-anchor="middle" >Touches tactiles</text>
<path d="M409.43,185.69 V172.68 H470.36" fill="none" stroke="#b4b4b4" stroke-width="0.5"/>
<path d="M409.43,185.69 H470.36 V172.68" fill="none" stroke="#ffffff" stroke-width="0.7"/>
<text x="439.89" y="180.79" font-size="4.5" fill="#2a2a2a" textLength="33.00" lengthAdjust="spacingAndGlyphs" text-anchor="middle" >Stylet numérique</text>
<path d="M471.04,187.40 V174.40 H577.16" fill="none" stroke="#b4b4b4" stroke-width="0.5"/>
<path d="M471.04,187.40 H577.16 V174.40" fill="none" stroke="#ffffff" stroke-width="0.7"/>
<text x="524.10" y="182.50" font-size="4.5" fill="#2a2a2a" textLength="33.00" lengthAdjust="spacingAndGlyphs" text-anchor="middle" >Espace de travail</text>
<path d="M577.84,185.69 V172.68 H636.03" fill="none" stroke="#b4b4b4" stroke-width="0.5"/>
<path d="M577.84,185.69 H636.03 V172.68" fill="none" stroke="#ffffff" stroke-width="0.7"/>
<text x="606.94" y="180.79" font-size="4.5" fill="#2a2a2a" textLength="17.60" lengthAdjust="spacingAndGlyphs" text-anchor="middle" >A propos</text>
<rect x="313.58" y="187.75" width="322.79" height="227.97" fill="none" stroke="#9c9c9c" stroke-width="0.6"/>
<text x="313.93" y="423.93" font-size="4.5" fill="#2a2a2a" textLength="36.00" lengthAdjust="spacingAndGlyphs" >Dispositif connecté</text>
<rect x="417.99" y="417.43" width="83.86" height="7.53" fill="#e1e1e1" stroke="#b8b8b8" stroke-width="0.5"/>
<text x="459.92" y="422.79" font-size="4.5" fill="#2a2a2a" textLength="30.00" lengthAdjust="spacingAndGlyphs" text-anchor="middle" >Besoin d'Admin</text>
<rect x="508.01" y="417.43" width="41.76" height="7.53" fill="#e1e1e1" stroke="#b8b8b8" stroke-width="0.5"/>
<text x="528.89" y="422.79" font-size="4.5" fill="#2a2a2a" textLength="6.40" lengthAdjust="spacingAndGlyphs" text-anchor="middle" >OK</text>
<rect x="550.46" y="417.43" width="41.76" height="7.53" fill="#e1e1e1" stroke="#b8b8b8" stroke-width="0.5"/>
<text x="571.34" y="422.79" font-size="4.5" fill="#2a2a2a" textLength="14.40" lengthAdjust="spacingAndGlyphs" text-anchor="middle" >Fermer</text>
<rect x="594.27" y="417.43" width="41.76" height="7.53" fill="#e1e1e1" stroke="#b8b8b8" stroke-width="0.5"/>
<text x="615.15" y="422.79" font-size="4.5" fill="#2a2a2a" textLength="18.60" lengthAdjust="spacingAndGlyphs" text-anchor="middle" >Appliquer</text>
<path d="M312.90,427.60 V157.80 H637.90" fill="none" stroke="#c4a030" stroke-width="0.8"/>
<path d="M312.90,427.40 H637.40 V157.80" fill="none" stroke="#f4ee9e" stroke-width="1.3"/>
<path d="M313.90,428.50 H638.50 V158.80" fill="none" stroke="#000" stroke-opacity="0.55" stroke-width="0.9"/>
<line x1="804.20" y1="118.00" x2="804.20" y2="488.80" stroke="#00ff00" stroke-width="1.6" />
<line x1="147.50" y1="488.10" x2="805.00" y2="488.10" stroke="#00ff00" stroke-width="1.5" />
<defs><clipPath id="shotclip"><rect x="147" y="118" width="658" height="371"/></clipPath></defs>
<path d="M313.5,494.5 H636.5 Q642.5,494.5 642.5,500.5 V712.5 L637.5,717.5 H312.5 L307.5,712.5 V500.5 Q307.5,494.5 313.5,494.5 Z" fill="none" stroke="#463e3e" stroke-width="1"/>
<path d="M307.5,518.7 H642.5 M307.5,693.5 H642.5" stroke="#2a2a2a" stroke-width="1.2" fill="none"/>
<path d="M364.5,691.5 V520.5 H616" fill="none" stroke="#4a4a4a" stroke-width="1"/>
<path d="M364.5,691.5 H617.5" fill="none" stroke="#6a6a6a" stroke-width="1"/>
<path d="M617.6,521 V692" fill="none" stroke="#9a9a9a" stroke-width="2"/>
<path d="M332.89,534.60 A8.9,8.9 0 1 0 332.89,544.20 H342.61 A8.9,8.9 0 1 0 342.61,534.60 Z" fill="none" stroke="#463e3e" stroke-width="0.9"/>
<circle cx="325.4" cy="539.4" r="5.8" fill="none" stroke="#463e3e" stroke-width="0.9"/>
<circle cx="350.1" cy="539.4" r="5.8" fill="none" stroke="#463e3e" stroke-width="0.9"/>
<path d="M332.89,556.90 A8.9,8.9 0 1 0 332.89,566.50 H342.61 A8.9,8.9 0 1 0 342.61,556.90 Z" fill="none" stroke="#463e3e" stroke-width="0.9"/>
<circle cx="325.4" cy="561.7" r="5.8" fill="none" stroke="#463e3e" stroke-width="0.9"/>
<circle cx="350.1" cy="561.7" r="5.8" fill="none" stroke="#463e3e" stroke-width="0.9"/>
<path d="M332.89,579.20 A8.9,8.9 0 1 0 332.89,588.80 H342.61 A8.9,8.9 0 1 0 342.61,579.20 Z" fill="none" stroke="#463e3e" stroke-width="0.9"/>
<circle cx="325.4" cy="584" r="5.8" fill="none" stroke="#463e3e" stroke-width="0.9"/>
<circle cx="350.1" cy="584" r="5.8" fill="none" stroke="#463e3e" stroke-width="0.9"/>
<path d="M332.89,623.10 A8.9,8.9 0 1 0 332.89,632.70 H342.61 A8.9,8.9 0 1 0 342.61,623.10 Z" fill="none" stroke="#463e3e" stroke-width="0.9"/>
<circle cx="325.4" cy="627.9" r="5.8" fill="none" stroke="#463e3e" stroke-width="0.9"/>
<circle cx="350.1" cy="627.9" r="5.8" fill="none" stroke="#463e3e" stroke-width="0.9"/>
<path d="M332.89,645.40 A8.9,8.9 0 1 0 332.89,655.00 H342.61 A8.9,8.9 0 1 0 342.61,645.40 Z" fill="none" stroke="#463e3e" stroke-width="0.9"/>
<circle cx="325.4" cy="650.2" r="5.8" fill="none" stroke="#463e3e" stroke-width="0.9"/>
<circle cx="350.1" cy="650.2" r="5.8" fill="none" stroke="#463e3e" stroke-width="0.9"/>
<path d="M332.89,667.80 A8.9,8.9 0 1 0 332.89,677.40 H342.61 A8.9,8.9 0 1 0 342.61,667.80 Z" fill="none" stroke="#463e3e" stroke-width="0.9"/>
<circle cx="325.4" cy="672.6" r="5.8" fill="none" stroke="#463e3e" stroke-width="0.9"/>
<circle cx="350.1" cy="672.6" r="5.8" fill="none" stroke="#463e3e" stroke-width="0.9"/>
<path d="M376.5,533 v4" stroke="#222" stroke-width="1"/>
<text x="383.6" y="536.6" font-size="3.7" fill="#000" text-anchor="middle" font-weight="bold">1</text>
<path d="M391.5,533 v4" stroke="#222" stroke-width="1"/>
<text x="398.4" y="536.6" font-size="3.7" fill="#000" text-anchor="middle" font-weight="bold">2</text>
<path d="M405.5,533 v4" stroke="#222" stroke-width="1"/>
<text x="413.3" y="536.6" font-size="3.7" fill="#000" text-anchor="middle" font-weight="bold">3</text>
<path d="M420.5,533 v4" stroke="#b8b8b8" stroke-width="1"/>
<text x="428.1" y="536.6" font-size="3.7" fill="#000" text-anchor="middle" font-weight="bold">4</text>
<path d="M435.5,533 v4" stroke="#b8b8b8" stroke-width="1"/>
<text x="443.0" y="536.6" font-size="3.7" fill="#000" text-anchor="middle" font-weight="bold">5</text>
<path d="M450.5,533 v4" stroke="#222" stroke-width="1"/>
<text x="457.8" y="536.6" font-size="3.7" fill="#000" text-anchor="middle" font-weight="bold">6</text>
<path d="M465.5,533 v4" stroke="#222" stroke-width="1"/>
<text x="472.7" y="536.6" font-size="3.7" fill="#000" text-anchor="middle" font-weight="bold">7</text>
<path d="M480.5,533 v4" stroke="#222" stroke-width="1"/>
<text x="487.5" y="536.6" font-size="3.7" fill="#000" text-anchor="middle" font-weight="bold">8</text>
<path d="M495.5,533 v4" stroke="#222" stroke-width="1"/>
<text x="502.4" y="536.6" font-size="3.7" fill="#000" text-anchor="middle" font-weight="bold">9</text>
<path d="M509.5,533 v4" stroke="#b8b8b8" stroke-width="1"/>
<text x="517.2" y="536.6" font-size="3.7" fill="#000" text-anchor="middle" font-weight="bold">10</text>
<path d="M524.5,533 v4" stroke="#b8b8b8" stroke-width="1"/>
<text x="532.1" y="536.6" font-size="3.7" fill="#000" text-anchor="middle" font-weight="bold">11</text>
<path d="M539.5,533 v4" stroke="#b8b8b8" stroke-width="1"/>
<text x="546.9" y="536.6" font-size="3.7" fill="#000" text-anchor="middle" font-weight="bold">12</text>
<path d="M554.5,533 v4" stroke="#222" stroke-width="1"/>
<text x="561.8" y="536.6" font-size="3.7" fill="#000" text-anchor="middle" font-weight="bold">13</text>
<path d="M569.5,533 v4" stroke="#222" stroke-width="1"/>
<text x="576.6" y="536.6" font-size="3.7" fill="#000" text-anchor="middle" font-weight="bold">14</text>
<path d="M584.5,533 v4" stroke="#222" stroke-width="1"/>
<text x="591.5" y="536.6" font-size="3.7" fill="#000" text-anchor="middle" font-weight="bold">15</text>
<path d="M598.5,533 v4" stroke="#222" stroke-width="1"/>
<text x="606.4" y="536.6" font-size="3.7" fill="#000" text-anchor="middle" font-weight="bold">16</text>
<rect x="374.5" y="532.5" width="239.3" height="148" fill="none" stroke="#00ff00" stroke-width="1.4"/>
<line x1="374.5" y1="532" x2="147.5" y2="118.5" stroke="#ffffff" stroke-width="1.35" clip-path="url(#shotclip)"/>
<line x1="374.5" y1="532" x2="147.5" y2="118.5" stroke="#0000ff" stroke-width="1.35" stroke-dasharray="10.27 6.84 3.42 6.84"/>
<line x1="613.5" y1="532" x2="804" y2="118.5" stroke="#ffffff" stroke-width="1.35" clip-path="url(#shotclip)"/>
<line x1="613.5" y1="532" x2="804" y2="118.5" stroke="#0000ff" stroke-width="1.35" stroke-dasharray="9.91 6.61 3.30 6.61"/>
<line x1="374.5" y1="680.5" x2="147.5" y2="488.5" stroke="#ffffff" stroke-width="1.35" clip-path="url(#shotclip)"/>
<line x1="374.5" y1="680.5" x2="147.5" y2="488.5" stroke="#0000ff" stroke-width="1.35" stroke-dasharray="11.79 7.86 3.93 7.86"/>
<line x1="613.5" y1="680.5" x2="804" y2="488.5" stroke="#ffffff" stroke-width="1.35" clip-path="url(#shotclip)"/>
<line x1="613.5" y1="680.5" x2="804" y2="488.5" stroke="#0000ff" stroke-width="1.35" stroke-dasharray="12.68 8.45 4.23 8.45"/>
</svg>

<div class="abs btn" style="left:6px;top:621px;width:171px;height:24px;line-height:24px;">Plein écran</div>
<div class="abs btn" style="left:6px;top:647px;width:171px;height:24px;line-height:24px;">Ratio écran</div>

<div class="abs grp" style="left:5px;top:684px;width:208px;height:64px;"></div>
<div class="abs grpl" style="left:12px;top:676px;">Zone de personnalisation</div>
<div class="abs lbl nar" style="left:0px;top:698px;width:60.5px;text-align:right;">Gauche</div>
<div class="abs inp" style="left:63px;top:694px;">0.000</div>
<div class="abs lbl" style="left:105px;top:698px;width:61px;text-align:right;">Droite</div>
<div class="abs inp" style="left:168px;top:694px;">1.000</div>
<div class="abs lbl nar" style="left:0px;top:724px;width:60.5px;text-align:right;">Haut</div>
<div class="abs inp" style="left:63px;top:720px;">0.000</div>
<div class="abs lbl nar" style="left:105px;top:724px;width:61px;text-align:right;">Bas</div>
<div class="abs inp" style="left:168px;top:720px;">1.000</div>

<div class="abs grp" style="left:833px;top:600px;width:110px;height:143px;"></div>
<div class="abs grpl" style="left:840px;top:592px;">Pivoter</div>
<div class="abs radio" style="left:857px;top:620px;"><div class="abs dot"></div></div>
<div class="abs lbl" style="left:876px;top:620px;">0°</div>
<div class="abs radio" style="left:857px;top:652px;"></div>
<div class="abs lbl" style="left:876px;top:652px;">90°</div>
<div class="abs radio" style="left:857px;top:684px;"></div>
<div class="abs lbl" style="left:876px;top:684px;">180°</div>
<div class="abs radio" style="left:857px;top:716px;"></div>
<div class="abs lbl" style="left:876px;top:716px;">270°</div>

<div class="abs lbl" style="left:2px;top:762px;letter-spacing:-0.42px;">Dispositif connecté</div>
<div class="abs btn" style="left:307px;top:756px;width:245px;height:22px;line-height:22px;">Besoin d'Admin</div>
<div class="abs btn" style="left:570px;top:756px;width:122px;height:22px;line-height:22px;">OK</div>
<div class="abs btn" style="left:694px;top:756px;width:122px;height:22px;line-height:22px;">Fermer</div>
<div class="abs btn" style="left:822px;top:756px;width:122px;height:22px;line-height:22px;">Appliquer</div>

<div class="abs" style="left:947px;top:0;width:1px;height:785px;background:#fcfcfc;"></div>
<div class="abs" style="left:948px;top:0;width:1px;height:785px;background:#a8a8a8;"></div>
<div class="abs" style="left:949px;top:0;width:1px;height:785px;background:#262626;"></div>
</body>
</html>
